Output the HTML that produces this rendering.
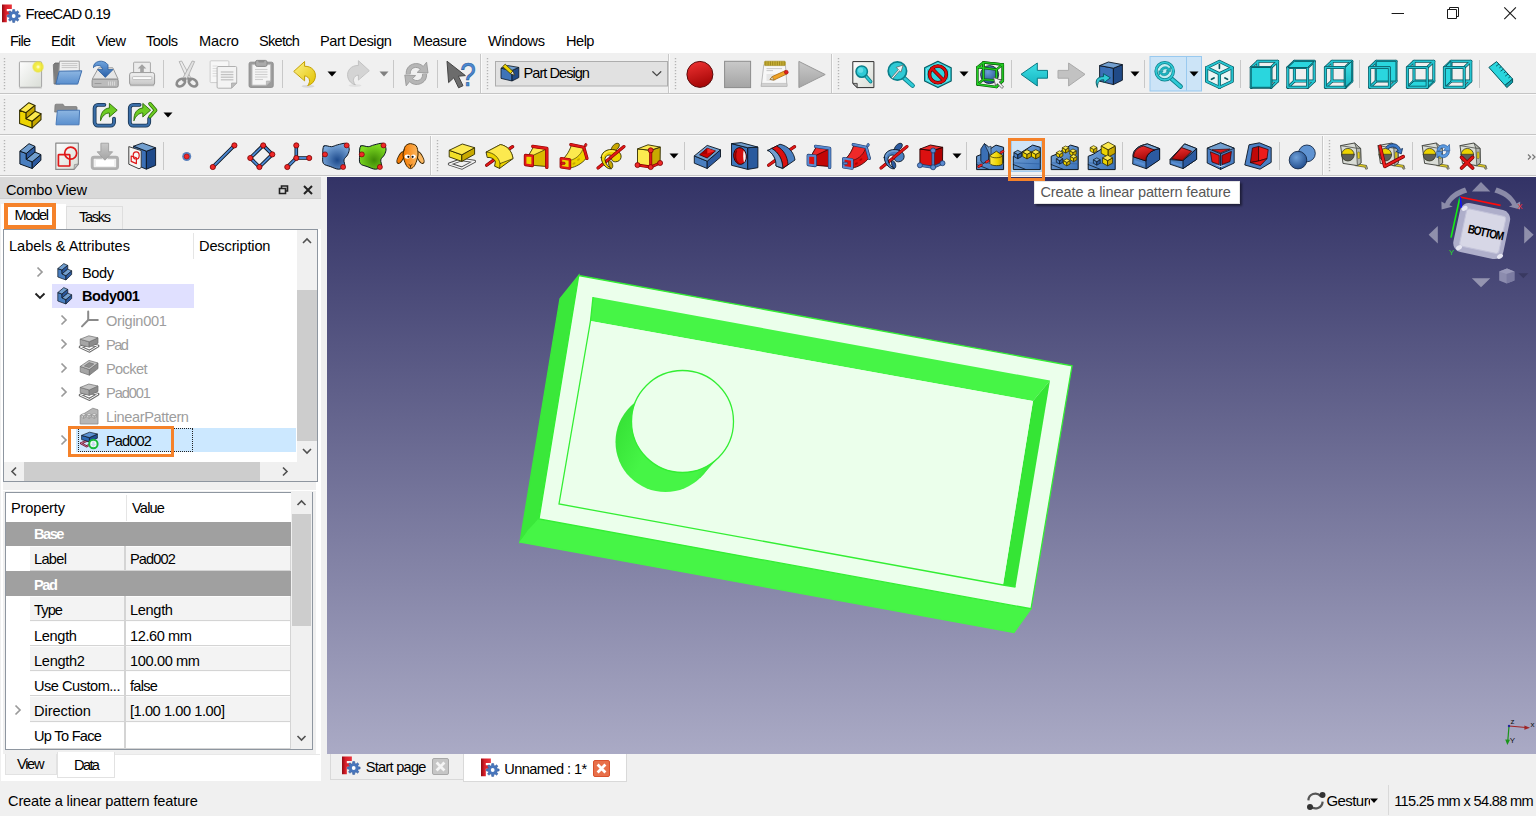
<!DOCTYPE html>
<html lang="en"><head><meta charset="utf-8"><title>FreeCAD 0.19</title>
<style>
html,body{margin:0;padding:0;}
body{width:1536px;height:816px;overflow:hidden;position:relative;background:#f0f0f0;font-family:"Liberation Sans",sans-serif;}
div,svg,span.t{position:absolute;}
span.t{white-space:nowrap;line-height:20px;}
svg{overflow:visible;}
</style></head>
<body>
<div style="left:0px;top:0px;width:1536px;height:53px;background:#fff;"></div>
<div style="left:0px;top:53px;width:1536px;height:124px;background:#f0f0f0;"></div>
<div style="left:0px;top:177px;width:1536px;height:639px;background:#f0f0f0;"></div>
<svg style="left:2px;top:4px;" width="21" height="20" viewBox="0 0 21 20"><defs><linearGradient id="gF" x1="0" y1="0" x2="1" y2="0"><stop offset="0" stop-color="#8e0a12"/><stop offset=".35" stop-color="#d81e28"/><stop offset="1" stop-color="#e8343c"/></linearGradient></defs><path d="M0 0.6h9.85v4.4h-5.05v2.3h3.9v3.4h-3.9v7.6h-4.8z" fill="url(#gF)"/><polygon points="16.24,10.79 18.13,11.03 18.13,12.97 16.24,13.21 15.77,14.36 16.93,15.86 15.56,17.23 14.06,16.07 12.91,16.54 12.67,18.43 10.73,18.43 10.49,16.54 9.34,16.07 7.84,17.23 6.47,15.86 7.63,14.36 7.16,13.21 5.27,12.97 5.27,11.03 7.16,10.79 7.63,9.64 6.47,8.14 7.84,6.77 9.34,7.93 10.49,7.46 10.73,5.57 12.67,5.57 12.91,7.46 14.06,7.93 15.56,6.77 16.93,8.14 15.77,9.64" fill="#4876bc" stroke="#2f5594" stroke-width=".5"/><circle cx="11.7" cy="12" r="1.9" fill="#fff"/></svg>
<span class="t" style="left:25.50px;top:4.42px;font-size:14.8px;color:#000;letter-spacing:-0.845px;">FreeCAD 0.19</span>
<svg style="left:1380px;top:0px;" width="156" height="28" viewBox="0 0 156 28"><path d="M11.6 13.5h12.4" stroke="#1a1a1a" stroke-width="1" fill="none"/><path d="M67.5 9.5h9v9h-9z M69.5 9.5v-2h9v9h-2" stroke="#1a1a1a" stroke-width="1" fill="none"/><path d="M124.3 7.3l11.6 11.8M135.9 7.3l-11.6 11.8" stroke="#1a1a1a" stroke-width="1.1" fill="none"/></svg>
<span class="t" style="left:10.00px;top:30.69px;font-size:14.6px;color:#000;letter-spacing:-0.841px;">File</span>
<span class="t" style="left:51.00px;top:30.69px;font-size:14.6px;color:#000;letter-spacing:-0.386px;">Edit</span>
<span class="t" style="left:96.00px;top:30.69px;font-size:14.6px;color:#000;letter-spacing:-0.460px;">View</span>
<span class="t" style="left:146.00px;top:30.69px;font-size:14.6px;color:#000;letter-spacing:-0.520px;">Tools</span>
<span class="t" style="left:199.00px;top:30.69px;font-size:14.6px;color:#000;letter-spacing:-0.140px;">Macro</span>
<span class="t" style="left:259.00px;top:30.69px;font-size:14.6px;color:#000;letter-spacing:-0.727px;">Sketch</span>
<span class="t" style="left:320.00px;top:30.69px;font-size:14.6px;color:#000;letter-spacing:-0.428px;">Part Design</span>
<span class="t" style="left:413.00px;top:30.69px;font-size:14.6px;color:#000;letter-spacing:-0.466px;">Measure</span>
<span class="t" style="left:488.00px;top:30.69px;font-size:14.6px;color:#000;letter-spacing:-0.371px;">Windows</span>
<span class="t" style="left:566.00px;top:30.69px;font-size:14.6px;color:#000;letter-spacing:-0.509px;">Help</span>
<div style="left:0px;top:93px;width:1536px;height:1px;background:#c5c5c5;"></div>
<div style="left:0px;top:94px;width:1536px;height:1px;background:#fafafa;"></div>
<div style="left:0px;top:134px;width:1536px;height:1px;background:#c5c5c5;"></div>
<div style="left:0px;top:135px;width:1536px;height:1px;background:#fafafa;"></div>
<div style="left:0px;top:175px;width:1536px;height:1px;background:#c5c5c5;"></div>
<div style="left:0px;top:176px;width:1536px;height:1px;background:#fafafa;"></div>
<svg style="left:3.4000000000000004px;top:58px;" width="4" height="32" viewBox="0 0 4 32"><path d="M1.5 0V32" stroke="#b4b4b4" stroke-width="1.4" stroke-dasharray="1.3 1.7"/></svg>
<svg style="left:485.9px;top:58px;" width="4" height="32" viewBox="0 0 4 32"><path d="M1.5 0V32" stroke="#b4b4b4" stroke-width="1.4" stroke-dasharray="1.3 1.7"/></svg>
<svg style="left:673.5px;top:58px;" width="4" height="32" viewBox="0 0 4 32"><path d="M1.5 0V32" stroke="#b4b4b4" stroke-width="1.4" stroke-dasharray="1.3 1.7"/></svg>
<svg style="left:837.1px;top:58px;" width="4" height="32" viewBox="0 0 4 32"><path d="M1.5 0V32" stroke="#b4b4b4" stroke-width="1.4" stroke-dasharray="1.3 1.7"/></svg>
<svg style="left:3.4000000000000004px;top:99px;" width="4" height="32" viewBox="0 0 4 32"><path d="M1.5 0V32" stroke="#b4b4b4" stroke-width="1.4" stroke-dasharray="1.3 1.7"/></svg>
<svg style="left:3.4000000000000004px;top:140px;" width="4" height="32" viewBox="0 0 4 32"><path d="M1.5 0V32" stroke="#b4b4b4" stroke-width="1.4" stroke-dasharray="1.3 1.7"/></svg>
<svg style="left:435.5px;top:140px;" width="4" height="32" viewBox="0 0 4 32"><path d="M1.5 0V32" stroke="#b4b4b4" stroke-width="1.4" stroke-dasharray="1.3 1.7"/></svg>
<svg style="left:1327.5px;top:140px;" width="4" height="32" viewBox="0 0 4 32"><path d="M1.5 0V32" stroke="#b4b4b4" stroke-width="1.4" stroke-dasharray="1.3 1.7"/></svg>
<div style="left:163.0px;top:60px;width:1px;height:28px;background:#c8c8c8;"></div>
<div style="left:282.0px;top:60px;width:1px;height:28px;background:#c8c8c8;"></div>
<div style="left:392.9px;top:60px;width:1px;height:28px;background:#c8c8c8;"></div>
<div style="left:437.0px;top:60px;width:1px;height:28px;background:#c8c8c8;"></div>
<div style="left:1011.2px;top:60px;width:1px;height:28px;background:#c8c8c8;"></div>
<div style="left:1143.9px;top:60px;width:1px;height:28px;background:#c8c8c8;"></div>
<div style="left:1240.0px;top:60px;width:1px;height:28px;background:#c8c8c8;"></div>
<div style="left:1359.3px;top:60px;width:1px;height:28px;background:#c8c8c8;"></div>
<div style="left:1478.5px;top:60px;width:1px;height:28px;background:#c8c8c8;"></div>
<div style="left:163.0px;top:142px;width:1px;height:28px;background:#c8c8c8;"></div>
<div style="left:683.9px;top:142px;width:1px;height:28px;background:#c8c8c8;"></div>
<div style="left:966.2px;top:142px;width:1px;height:28px;background:#c8c8c8;"></div>
<div style="left:1122.4px;top:142px;width:1px;height:28px;background:#c8c8c8;"></div>
<div style="left:1279.1px;top:142px;width:1px;height:28px;background:#c8c8c8;"></div>
<div style="left:1411.9px;top:142px;width:1px;height:28px;background:#c8c8c8;"></div>
<div style="left:480px;top:54px;width:1px;height:39px;background:#c8c8c8;"></div>
<div style="left:481px;top:54px;width:1px;height:39px;background:#fbfbfb;"></div>
<div style="left:667.6px;top:54px;width:1px;height:39px;background:#c8c8c8;"></div>
<div style="left:668.6px;top:54px;width:1px;height:39px;background:#fbfbfb;"></div>
<div style="left:831.4px;top:54px;width:1px;height:39px;background:#c8c8c8;"></div>
<div style="left:832.4px;top:54px;width:1px;height:39px;background:#fbfbfb;"></div>
<div style="left:429.8px;top:136px;width:1px;height:39px;background:#c8c8c8;"></div>
<div style="left:430.8px;top:136px;width:1px;height:39px;background:#fbfbfb;"></div>
<div style="left:1321.9px;top:136px;width:1px;height:39px;background:#c8c8c8;"></div>
<div style="left:1322.9px;top:136px;width:1px;height:39px;background:#fbfbfb;"></div>
<svg style="left:0px;top:0px;" width="1536" height="180" viewBox="0 0 1536 180"><defs>
<linearGradient id="gPage" x1="0" y1="0" x2="1" y2="1"><stop offset="0" stop-color="#fdfdfd"/><stop offset="1" stop-color="#d9ddd6"/></linearGradient>
<linearGradient id="gGray" x1="0" y1="0" x2="0" y2="1"><stop offset="0" stop-color="#c9c9c9"/><stop offset="1" stop-color="#a4a4a4"/></linearGradient>
<linearGradient id="gGray2" x1="0" y1="0" x2="0" y2="1"><stop offset="0" stop-color="#f4f4f4"/><stop offset="1" stop-color="#c4c4c4"/></linearGradient>
<linearGradient id="gRed" x1="0" y1="0" x2="0.3" y2="1"><stop offset="0" stop-color="#f23434"/><stop offset="1" stop-color="#a80808"/></linearGradient>
<linearGradient id="gBlueF" x1="0" y1="0" x2="0" y2="1"><stop offset="0" stop-color="#8db6e2"/><stop offset="1" stop-color="#5a8fce"/></linearGradient>
<linearGradient id="gBlueA" x1="0" y1="0" x2="0" y2="1"><stop offset="0" stop-color="#6fa4de"/><stop offset="1" stop-color="#2a60a8"/></linearGradient>
<linearGradient id="gYel" x1="0" y1="0" x2="1" y2="1"><stop offset="0" stop-color="#fdf28a"/><stop offset="1" stop-color="#e2c200"/></linearGradient>
<linearGradient id="gYelH" x1="0" y1="0" x2="1" y2="0"><stop offset="0" stop-color="#fce94f"/><stop offset="0.6" stop-color="#edd400"/><stop offset="1" stop-color="#c4a000"/></linearGradient>
<linearGradient id="gCyan" x1="0" y1="0" x2="0" y2="1"><stop offset="0" stop-color="#3fe0e6"/><stop offset="1" stop-color="#14b4c0"/></linearGradient>
<linearGradient id="gBlueL" x1="0" y1="0" x2="1" y2="1"><stop offset="0" stop-color="#7aa7da"/><stop offset="1" stop-color="#3b72b8"/></linearGradient>
<radialGradient id="gGlow"><stop offset="0" stop-color="#fffff0"/><stop offset="0.35" stop-color="#f6f04a"/><stop offset="0.75" stop-color="#ece42a" stop-opacity=".85"/><stop offset="1" stop-color="#ece42a" stop-opacity="0"/></radialGradient>
<radialGradient id="gSph" cx=".4" cy=".35" r=".7"><stop offset="0" stop-color="#6d9fd8"/><stop offset="1" stop-color="#1f4a8a"/></radialGradient>
<radialGradient id="gBlobB" cx=".55" cy=".65" r=".6"><stop offset="0" stop-color="#1d4a8c"/><stop offset="1" stop-color="#7aa7da"/></radialGradient>
<radialGradient id="gBlobG" cx=".55" cy=".65" r=".6"><stop offset="0" stop-color="#3f8a06"/><stop offset="1" stop-color="#7edc22"/></radialGradient>
<linearGradient id="gOr" x1="0" y1="0" x2="1" y2="0"><stop offset="0" stop-color="#f57900"/><stop offset="1" stop-color="#fcb860"/></linearGradient>
<linearGradient id="gView" x1="0" y1="0" x2="0" y2="1"><stop offset="0" stop-color="#333366"/><stop offset="1" stop-color="#a3a3be"/></linearGradient>
</defs><rect x="19.40" y="61.70" width="22.20" height="25.60" fill="url(#gPage)" rx="1" stroke="#a4a4a4" stroke-width="1" /><line x1="19.60" y1="87.90" x2="41.40" y2="87.90" stroke="#b8b8b8" stroke-width="1" stroke-linecap="round"/><circle cx="38.10" cy="66.90" r="6.30" fill="url(#gGlow)" /><path d="M53.6 64.5 L55 63 L60 63 L60 84 L54.5 84Z" fill="#7d7d7d" stroke="#666" stroke-width="0.8" stroke-linejoin="round" stroke-linecap="round" /><polygon points="59.60,61.20 79.20,61.20 79.40,72.00 58.20,83.00" fill="#f0f0f0" stroke="#9c9c9c" stroke-width="0.9" stroke-linejoin="round" /><line x1="62.00" y1="63.60" x2="77.00" y2="63.60" stroke="#c6c6c6" stroke-width="1" stroke-linecap="round"/><line x1="62.00" y1="65.60" x2="77.00" y2="65.60" stroke="#c6c6c6" stroke-width="1" stroke-linecap="round"/><line x1="62.00" y1="67.60" x2="77.00" y2="67.60" stroke="#c6c6c6" stroke-width="1" stroke-linecap="round"/><polygon points="59.20,71.20 81.80,70.80 77.70,84.10 55.90,84.10" fill="url(#gBlueF)" stroke="#3f6fae" stroke-width="1" stroke-linejoin="round" /><polygon points="98.60,67.80 112.80,67.80 118.10,79.20 92.20,79.20" fill="#e6e6e6" stroke="#9a9a9a" stroke-width="1" stroke-linejoin="round" /><rect x="92.10" y="79.20" width="26.10" height="8.00" fill="#bcbcbc" rx="1.5" stroke="#8c8c8c" stroke-width="1" /><line x1="108.50" y1="81.50" x2="108.50" y2="85.50" stroke="#d8d8d8" stroke-width="1" stroke-linecap="butt"/><line x1="110.50" y1="81.50" x2="110.50" y2="85.50" stroke="#d8d8d8" stroke-width="1" stroke-linecap="butt"/><line x1="112.50" y1="81.50" x2="112.50" y2="85.50" stroke="#d8d8d8" stroke-width="1" stroke-linecap="butt"/><line x1="114.50" y1="81.50" x2="114.50" y2="85.50" stroke="#d8d8d8" stroke-width="1" stroke-linecap="butt"/><line x1="95.00" y1="83.50" x2="101.00" y2="83.50" stroke="#9a9a9a" stroke-width="1.2" stroke-linecap="round"/><path d="M93.5 67.3 C92.8 61 103.5 58.5 108 64.8 L108 69.6 L113 69.6 L105.3 77.4 L97.6 69.6 L102.6 69.6 C102 65.5 97.5 63.8 93.5 67.3Z" fill="url(#gBlueA)" stroke="#2a5c9c" stroke-width="0.8" stroke-linejoin="round" stroke-linecap="round" /><rect x="133.60" y="62.20" width="16.80" height="12.00" fill="#ececec" rx="0.8" stroke="#a8a8a8" stroke-width="1" /><polygon points="142.00,64.30 146.30,68.60 143.80,68.60 143.80,72.00 140.20,72.00 140.20,68.60 137.70,68.60" fill="#a2a2a2" /><rect x="129.60" y="72.60" width="25.00" height="12.60" fill="url(#gGray2)" rx="2.2" stroke="#9a9a9a" stroke-width="1" /><rect x="132.60" y="76.60" width="19.20" height="3.00" fill="#fbfbfb" rx="0.8" stroke="#b4b4b4" stroke-width="0.8" /><line x1="130.50" y1="85.70" x2="153.80" y2="85.70" stroke="#b4b4b4" stroke-width="1" stroke-linecap="round"/><polygon points="179.20,61.60 181.60,61.00 190.80,77.80 187.20,79.60" fill="#ebebeb" stroke="#a6a6a6" stroke-width="0.8" stroke-linejoin="round" /><polygon points="194.60,61.60 192.20,61.00 183.00,77.80 186.60,79.60" fill="#e2e2e2" stroke="#a6a6a6" stroke-width="0.8" stroke-linejoin="round" /><ellipse cx="180.90" cy="82.60" rx="4.60" ry="3.30" fill="none" stroke="#8c8c8c" stroke-width="2.7" transform="rotate(-38 180.9 82.6)"/><ellipse cx="192.90" cy="82.60" rx="4.60" ry="3.30" fill="none" stroke="#8c8c8c" stroke-width="2.7" transform="rotate(38 192.9 82.6)"/><line x1="185.20" y1="78.60" x2="183.40" y2="80.20" stroke="#8c8c8c" stroke-width="2.7" stroke-linecap="round"/><line x1="188.60" y1="78.60" x2="190.40" y2="80.20" stroke="#8c8c8c" stroke-width="2.7" stroke-linecap="round"/><rect x="210.10" y="60.80" width="18.80" height="21.80" fill="#f7f7f7" rx="1" stroke="#cdcdcd" stroke-width="1" /><line x1="213.00" y1="66.00" x2="217.00" y2="66.00" stroke="#dcdcdc" stroke-width="1" stroke-linecap="round"/><line x1="213.00" y1="68.50" x2="217.00" y2="68.50" stroke="#dcdcdc" stroke-width="1" stroke-linecap="round"/><line x1="213.00" y1="71.00" x2="217.00" y2="71.00" stroke="#dcdcdc" stroke-width="1" stroke-linecap="round"/><line x1="213.00" y1="73.50" x2="217.00" y2="73.50" stroke="#dcdcdc" stroke-width="1" stroke-linecap="round"/><line x1="213.00" y1="76.00" x2="217.00" y2="76.00" stroke="#dcdcdc" stroke-width="1" stroke-linecap="round"/><path d="M218.3 66.5 H235.5 a1.2 1.2 0 0 1 1.2 1.2 V83 L231.5 88.2 H218.3 a1.2 1.2 0 0 1 -1.2 -1.2 V67.7 a1.2 1.2 0 0 1 1.2 -1.2Z" fill="#f3f3f3" stroke="#b0b0b0" stroke-width="1" stroke-linejoin="round" stroke-linecap="round" /><polygon points="236.70,83.00 231.50,88.20 231.50,83.00" fill="#bdbdbd" stroke="#a6a6a6" stroke-width="0.7" stroke-linejoin="round" /><line x1="220.80" y1="72.00" x2="233.40" y2="72.00" stroke="#c2c2c2" stroke-width="1.3" stroke-linecap="butt"/><line x1="220.80" y1="74.60" x2="233.40" y2="74.60" stroke="#c2c2c2" stroke-width="1.3" stroke-linecap="butt"/><line x1="220.80" y1="77.20" x2="233.40" y2="77.20" stroke="#c2c2c2" stroke-width="1.3" stroke-linecap="butt"/><line x1="220.80" y1="79.80" x2="233.40" y2="79.80" stroke="#c2c2c2" stroke-width="1.3" stroke-linecap="butt"/><rect x="249.10" y="62.20" width="24.10" height="25.20" fill="#9c9c9c" rx="1.6" stroke="#8e8e8e" stroke-width="1" /><path d="M252.2 64.6 H270.6 V81 L266.4 85.2 H252.2Z" fill="#f5f5f5" stroke="#b8b8b8" stroke-width="0.8" stroke-linejoin="round" stroke-linecap="round" /><polygon points="270.60,81.00 266.40,85.20 266.40,81.00" fill="#c2c2c2" stroke="#a6a6a6" stroke-width="0.6" stroke-linejoin="round" /><rect x="255.60" y="60.40" width="11.40" height="6.00" fill="#ababab" rx="1.6" stroke="#8a8a8a" stroke-width="1" /><rect x="258.30" y="60.20" width="6.00" height="2.20" fill="#8f8f8f" rx="1" /><line x1="255.00" y1="69.50" x2="267.50" y2="69.50" stroke="#cfcfcf" stroke-width="1.1" stroke-linecap="butt"/><line x1="255.00" y1="72.00" x2="267.50" y2="72.00" stroke="#cfcfcf" stroke-width="1.1" stroke-linecap="butt"/><line x1="255.00" y1="74.50" x2="267.50" y2="74.50" stroke="#cfcfcf" stroke-width="1.1" stroke-linecap="butt"/><line x1="255.00" y1="77.00" x2="267.50" y2="77.00" stroke="#cfcfcf" stroke-width="1.1" stroke-linecap="butt"/><line x1="255.00" y1="79.50" x2="263.00" y2="79.50" stroke="#cfcfcf" stroke-width="1.1" stroke-linecap="butt"/><ellipse cx="308.00" cy="86.30" rx="6.50" ry="1.40" fill="#000" opacity=".10"/><path d="M294 71.2 L304.6 61.5 L304.6 66.3 C311.5 66 316.3 71 315.3 77.5 C314.6 81.8 311.5 84.6 307.7 85.5 C310.5 82.5 310.5 76.8 304.6 75.8 L304.6 80.5Z" fill="url(#gYel)" stroke="#c4a000" stroke-width="1" stroke-linejoin="round" stroke-linecap="round" /><g transform="translate(663 -0.8) scale(-1 1)"><path d="M294 71.2 L304.6 61.5 L304.6 66.3 C311.5 66 316.3 71 315.3 77.5 C314.6 81.8 311.5 84.6 307.7 85.5 C310.5 82.5 310.5 76.8 304.6 75.8 L304.6 80.5Z" fill="#d4d4d4" stroke="#c2c2c2" stroke-width="1" stroke-linejoin="round" stroke-linecap="round" /></g><ellipse cx="355.00" cy="85.60" rx="6.50" ry="1.40" fill="#000" opacity=".06"/><path d="M406.2 73.5 C405.5 64 418 60.5 423.2 66.5 L426.6 62.2 L428 73 L417.2 72.4 L420.4 69.3 C416.5 65.6 410 67.5 410.2 73.5Z" fill="#b6b6b6" stroke="#999" stroke-width="0.9" stroke-linejoin="round" stroke-linecap="round" /><path d="M426.6 74.5 C427.3 84 414.8 87.5 409.6 81.5 L406.2 85.8 L404.8 75 L415.6 75.6 L412.4 78.7 C416.3 82.4 422.8 80.5 422.6 74.5Z" fill="#b6b6b6" stroke="#999" stroke-width="0.9" stroke-linejoin="round" stroke-linecap="round" /><text x="460.2" y="86.2" font-family="Liberation Sans, sans-serif" font-size="33.5" fill="#4a8ad4" stroke="#2c5c9c" stroke-width="0.7" textLength="15.5" lengthAdjust="spacingAndGlyphs">?</text><polygon points="447.00,61.20 448.60,82.60 453.80,77.80 458.60,87.80 463.00,85.70 458.40,76.20 465.40,75.60" fill="#6c6c6c" stroke="#454545" stroke-width="1" stroke-linejoin="round" /><rect x="495.50" y="61.50" width="172.00" height="24.50" fill="#e1e1e1" stroke="#adadad" stroke-width="1" /><polygon points="501.00,68.20 512.00,70.40 512.00,81.00 501.00,78.40" fill="#3f74b8" stroke="#0b1521" stroke-width="0.8" stroke-linejoin="round" /><polygon points="512.00,70.40 518.80,67.40 518.80,77.60 512.00,81.00" fill="#204a87" stroke="#0b1521" stroke-width="0.8" stroke-linejoin="round" /><polygon points="501.00,68.20 508.00,65.60 518.80,67.40 512.00,70.40" fill="#729fcf" stroke="#0b1521" stroke-width="0.8" stroke-linejoin="round" /><polygon points="502.60,66.60 505.20,64.20 512.80,71.20 510.40,73.60" fill="#edd400" stroke="#3a3200" stroke-width="0.8" stroke-linejoin="round" /><polygon points="510.40,73.60 512.80,71.20 514.60,75.20" fill="#f4f0e6" stroke="#3a3200" stroke-width="0.7" stroke-linejoin="round" /><polyline points="652.80,71.80 656.80,75.60 660.80,71.80" fill="none" stroke="#444" stroke-width="1.3" stroke-linecap="round" stroke-linejoin="round" /><circle cx="699.90" cy="74.40" r="13.00" fill="url(#gRed)" stroke="#5a0a0a" stroke-width="1" /><rect x="724.60" y="61.30" width="26.00" height="26.30" fill="url(#gGray)" stroke="#8c8c8c" stroke-width="1" /><path d="M764.2 64.8 H785.4 L787 86.4 H761.6Z" fill="#f7f7f7" stroke="#b4b4b4" stroke-width="0.9" stroke-linejoin="round" stroke-linecap="round" /><path d="M761.8 83.4 H786.8 L787 86.4 H761.6Z" fill="#d2d2d2" stroke="#b4b4b4" stroke-width="0.6" stroke-linejoin="round" stroke-linecap="round" /><rect x="764.40" y="61.20" width="21.00" height="4.40" fill="#c9b238" rx="1" stroke="#a89020" stroke-width="0.6" /><line x1="765.80" y1="61.40" x2="765.80" y2="65.40" stroke="#8a7410" stroke-width="0.7" stroke-linecap="butt"/><line x1="768.10" y1="61.40" x2="768.10" y2="65.40" stroke="#8a7410" stroke-width="0.7" stroke-linecap="butt"/><line x1="770.40" y1="61.40" x2="770.40" y2="65.40" stroke="#8a7410" stroke-width="0.7" stroke-linecap="butt"/><line x1="772.70" y1="61.40" x2="772.70" y2="65.40" stroke="#8a7410" stroke-width="0.7" stroke-linecap="butt"/><line x1="775.00" y1="61.40" x2="775.00" y2="65.40" stroke="#8a7410" stroke-width="0.7" stroke-linecap="butt"/><line x1="777.30" y1="61.40" x2="777.30" y2="65.40" stroke="#8a7410" stroke-width="0.7" stroke-linecap="butt"/><line x1="779.60" y1="61.40" x2="779.60" y2="65.40" stroke="#8a7410" stroke-width="0.7" stroke-linecap="butt"/><line x1="781.90" y1="61.40" x2="781.90" y2="65.40" stroke="#8a7410" stroke-width="0.7" stroke-linecap="butt"/><line x1="784.20" y1="61.40" x2="784.20" y2="65.40" stroke="#8a7410" stroke-width="0.7" stroke-linecap="butt"/><line x1="766.50" y1="68.60" x2="782.00" y2="68.60" stroke="#c8c8c8" stroke-width="1" stroke-linecap="butt"/><line x1="766.50" y1="70.60" x2="773.00" y2="70.60" stroke="#c8c8c8" stroke-width="1" stroke-linecap="butt"/><rect x="766.50" y="74.00" width="9.00" height="7.00" fill="#e6e6e6" /><polygon points="770.00,79.40 772.20,76.60 785.40,70.60 787.20,73.80 774.00,80.00" fill="#f0a326" stroke="#a86a10" stroke-width="0.8" stroke-linejoin="round" /><polygon points="770.00,79.40 772.20,76.60 774.00,80.00" fill="#e8d8b0" stroke="#8a6a30" stroke-width="0.6" stroke-linejoin="round" /><circle cx="786.30" cy="72.20" r="1.90" fill="#e02020" stroke="#a01010" stroke-width="0.6" /><polygon points="798.90,61.40 798.90,87.60 825.20,74.50" fill="url(#gGray)" stroke="#999" stroke-width="1" stroke-linejoin="round" /><polygon points="852.80,61.60 873.90,61.60 873.90,87.60 857.20,87.60 852.80,83.40" fill="url(#gPage)" stroke="#2e2e2e" stroke-width="1" stroke-linejoin="round" /><polygon points="852.80,83.40 857.20,83.40 857.20,87.60" fill="#b0b0b0" stroke="#2e2e2e" stroke-width="0.8" stroke-linejoin="round" /><line x1="865.60" y1="75.80" x2="870.60" y2="81.60" stroke="#0a7f8a" stroke-width="3.6" stroke-linecap="round"/><line x1="865.60" y1="75.80" x2="870.60" y2="81.60" stroke="#2fcad6" stroke-width="1.9" stroke-linecap="round"/><circle cx="861.70" cy="71.60" r="5.70" fill="#2fcad6" stroke="#0a7f8a" stroke-width="1.5" /><circle cx="860.60" cy="70.20" r="2.60" fill="#7be6ee" opacity=".7"/><line x1="904.00" y1="78.00" x2="912.60" y2="85.60" stroke="#0a7f8a" stroke-width="4.6" stroke-linecap="round"/><line x1="904.00" y1="78.00" x2="912.60" y2="85.60" stroke="#2fcad6" stroke-width="2.8" stroke-linecap="round"/><circle cx="897.40" cy="71.00" r="9.20" fill="#2fcad6" stroke="#0a7f8a" stroke-width="1.7" /><polygon points="891.60,77.40 898.40,69.60 896.20,67.40 903.20,65.00 901.00,72.20 899.60,70.80 892.80,78.60" fill="#f4f4f4" stroke="#5a6a6a" stroke-width="0.8" stroke-linejoin="round" /><polygon points="937.90,61.20 951.20,67.80 951.20,81.00 937.90,87.60 924.60,81.00 924.60,67.80" fill="#2fd2dc" stroke="#075a62" stroke-width="1.1" stroke-linejoin="round" /><polygon points="937.90,63.40 949.20,69.00 949.20,79.80 937.90,85.40 926.60,79.80 926.60,69.00" fill="none" stroke="#8af0f4" stroke-width="0.8" stroke-linejoin="round" /><circle cx="937.90" cy="74.40" r="8.40" fill="none" stroke="#5a0000" stroke-width="3.6" /><line x1="932.00" y1="68.40" x2="943.80" y2="80.40" stroke="#5a0000" stroke-width="3.6" stroke-linecap="round"/><circle cx="937.90" cy="74.40" r="8.40" fill="none" stroke="#dc0c0c" stroke-width="2.3" /><line x1="932.00" y1="68.40" x2="943.80" y2="80.40" stroke="#dc0c0c" stroke-width="2.3" stroke-linecap="round"/><polyline points="983.40,62.40 1002.80,64.40 1002.80,81.00 983.40,79.60 983.40,62.40" fill="none" stroke="#0a5a0a" stroke-width="2.5" stroke-linecap="round" stroke-linejoin="round" /><polyline points="983.40,62.40 1002.80,64.40 1002.80,81.00 983.40,79.60 983.40,62.40" fill="none" stroke="#1fc81f" stroke-width="1.3" stroke-linecap="round" stroke-linejoin="round" /><circle cx="989.60" cy="74.60" r="9.00" fill="url(#gSph)" stroke="#0b1521" stroke-width="0.8" /><polyline points="983.40,62.40 1002.80,64.40 1002.80,81.00 983.40,79.60 983.40,62.40" fill="none" stroke="#0a5a0a" stroke-width="2.5" stroke-linecap="round" stroke-linejoin="round" /><polyline points="977.40,67.20 996.40,69.60 996.40,87.00 977.40,84.40 977.40,67.20" fill="none" stroke="#0a5a0a" stroke-width="2.5" stroke-linecap="round" stroke-linejoin="round" /><line x1="977.40" y1="67.20" x2="983.40" y2="62.40" stroke="#0a5a0a" stroke-width="2.5" stroke-linecap="round"/><line x1="996.40" y1="69.60" x2="1002.80" y2="64.40" stroke="#0a5a0a" stroke-width="2.5" stroke-linecap="round"/><line x1="996.40" y1="87.00" x2="1002.80" y2="81.00" stroke="#0a5a0a" stroke-width="2.5" stroke-linecap="round"/><line x1="977.40" y1="84.40" x2="983.40" y2="79.60" stroke="#0a5a0a" stroke-width="2.5" stroke-linecap="round"/><polyline points="983.40,62.40 1002.80,64.40 1002.80,81.00 983.40,79.60 983.40,62.40" fill="none" stroke="#22d022" stroke-width="1.3" stroke-linecap="round" stroke-linejoin="round" /><polyline points="977.40,67.20 996.40,69.60 996.40,87.00 977.40,84.40 977.40,67.20" fill="none" stroke="#22d022" stroke-width="1.3" stroke-linecap="round" stroke-linejoin="round" /><line x1="977.40" y1="67.20" x2="983.40" y2="62.40" stroke="#22d022" stroke-width="1.3" stroke-linecap="round"/><line x1="996.40" y1="69.60" x2="1002.80" y2="64.40" stroke="#22d022" stroke-width="1.3" stroke-linecap="round"/><line x1="996.40" y1="87.00" x2="1002.80" y2="81.00" stroke="#22d022" stroke-width="1.3" stroke-linecap="round"/><line x1="977.40" y1="84.40" x2="983.40" y2="79.60" stroke="#22d022" stroke-width="1.3" stroke-linecap="round"/><polygon points="993.60,77.40 1001.60,80.40 999.00,82.00 1003.60,87.00 1001.80,88.40 997.40,83.60 995.60,86.00" fill="#f2f2f2" stroke="#5a5a5a" stroke-width="0.8" stroke-linejoin="round" /><polygon points="1021.00,74.30 1037.30,63.00 1037.30,70.40 1047.50,70.40 1047.50,78.20 1037.30,78.20 1037.30,86.00" fill="url(#gCyan)" stroke="#0a7a84" stroke-width="1" stroke-linejoin="round" /><polygon points="1085.00,74.30 1068.60,63.00 1068.60,70.40 1058.00,70.40 1058.00,78.20 1068.60,78.20 1068.60,86.00" fill="#c2c2c2" stroke="#aaaaaa" stroke-width="1" stroke-linejoin="round" /><polygon points="1099.60,65.60 1113.40,68.20 1113.40,84.60 1099.60,81.20" fill="#3b70b6" stroke="#0b1521" stroke-width="0.9" stroke-linejoin="round" /><polygon points="1113.40,68.20 1122.40,64.60 1122.40,80.20 1113.40,84.60" fill="#204a87" stroke="#0b1521" stroke-width="0.9" stroke-linejoin="round" /><polygon points="1099.60,65.60 1108.40,62.00 1122.40,64.60 1113.40,68.20" fill="#729fcf" stroke="#0b1521" stroke-width="0.9" stroke-linejoin="round" /><path d="M1097.4 87 C1094 80.5 1097.5 76.5 1103.6 76.6 L1103.4 73.6 L1110.4 77.8 L1104 82.6 L1103.8 79.8 C1099.5 79.6 1097.5 82 1097.4 87Z" fill="#2fcad6" stroke="#06545c" stroke-width="0.9" stroke-linejoin="round" stroke-linecap="round" /><rect x="1150.00" y="56.50" width="51.50" height="34.50" fill="#cce4f7" stroke="#99c9ef" stroke-width="1" /><line x1="1186.50" y1="57.00" x2="1186.50" y2="90.50" stroke="#99c9ef" stroke-width="1" stroke-linecap="butt"/><line x1="1171.00" y1="78.20" x2="1180.60" y2="86.60" stroke="#0a7f8a" stroke-width="4.6" stroke-linecap="round"/><line x1="1171.00" y1="78.20" x2="1180.60" y2="86.60" stroke="#2fcad6" stroke-width="2.8" stroke-linecap="round"/><circle cx="1164.70" cy="71.20" r="8.70" fill="#c4eef2" stroke="#0a7f8a" stroke-width="3.2" /><circle cx="1164.70" cy="71.20" r="8.70" fill="none" stroke="#2fcad6" stroke-width="1.7" /><path d="M1160.2 70.4 C1161 66 1167.5 65.6 1169 68.6 L1170.6 67.2 L1170.6 71.6 L1166.2 71 L1167.6 69.8 C1166.4 68.2 1163 68.6 1162.6 70.8Z" fill="#18b4c0" stroke="#0a7f8a" stroke-width="0.5" stroke-linejoin="round" stroke-linecap="round" /><path d="M1169.2 72 C1168.4 76.4 1161.9 76.8 1160.4 73.8 L1158.8 75.2 L1158.8 70.8 L1163.2 71.4 L1161.8 72.6 C1163 74.2 1166.4 73.8 1166.8 71.6Z" fill="#18b4c0" stroke="#0a7f8a" stroke-width="0.5" stroke-linejoin="round" stroke-linecap="round" /><polygon points="1219.40,61.40 1232.20,67.60 1232.20,81.40 1219.40,87.40 1206.60,81.40 1206.60,67.60" fill="#e9f6f6" /><polygon points="1219.40,61.40 1232.20,67.60 1232.20,81.40 1219.40,87.40 1206.60,81.40 1206.60,67.60" fill="none" stroke="#06545c" stroke-width="3.2" stroke-linejoin="round" /><polyline points="1206.60,67.60 1219.40,73.80 1232.20,67.60" fill="none" stroke="#06545c" stroke-width="3.2" stroke-linecap="round" stroke-linejoin="round" /><line x1="1219.40" y1="73.80" x2="1219.40" y2="87.40" stroke="#06545c" stroke-width="3.2" stroke-linecap="round"/><polygon points="1219.40,61.40 1232.20,67.60 1232.20,81.40 1219.40,87.40 1206.60,81.40 1206.60,67.60" fill="none" stroke="#25c4d0" stroke-width="1.8" stroke-linejoin="round" /><polyline points="1206.60,67.60 1219.40,73.80 1232.20,67.60" fill="none" stroke="#25c4d0" stroke-width="1.8" stroke-linecap="round" stroke-linejoin="round" /><line x1="1219.40" y1="73.80" x2="1219.40" y2="87.40" stroke="#25c4d0" stroke-width="1.8" stroke-linecap="round"/><line x1="1219.40" y1="64.50" x2="1219.40" y2="68.50" stroke="#06545c" stroke-width="1.6" stroke-linecap="round"/><line x1="1211.50" y1="79.20" x2="1214.00" y2="78.00" stroke="#06545c" stroke-width="1.8" stroke-linecap="round"/><line x1="1225.00" y1="78.00" x2="1227.50" y2="79.20" stroke="#06545c" stroke-width="1.8" stroke-linecap="round"/><polygon points="1251.20,67.50 1271.00,67.50 1271.00,87.30 1251.20,87.30 1251.20,67.50" fill="#e9f6f6" opacity=".0"/><polygon points="1257.80,61.30 1277.60,61.30 1277.60,81.10 1257.80,81.10" fill="none" stroke="#06545c" stroke-width="3.0" stroke-linejoin="round" /><line x1="1251.20" y1="67.50" x2="1257.80" y2="61.30" stroke="#06545c" stroke-width="3.0" stroke-linecap="round"/><line x1="1271.00" y1="67.50" x2="1277.60" y2="61.30" stroke="#06545c" stroke-width="3.0" stroke-linecap="round"/><line x1="1271.00" y1="87.30" x2="1277.60" y2="81.10" stroke="#06545c" stroke-width="3.0" stroke-linecap="round"/><line x1="1251.20" y1="87.30" x2="1257.80" y2="81.10" stroke="#06545c" stroke-width="3.0" stroke-linecap="round"/><polygon points="1257.80,61.30 1277.60,61.30 1277.60,81.10 1257.80,81.10" fill="none" stroke="#25c4d0" stroke-width="1.6" stroke-linejoin="round" /><line x1="1251.20" y1="67.50" x2="1257.80" y2="61.30" stroke="#25c4d0" stroke-width="1.6" stroke-linecap="round"/><line x1="1271.00" y1="67.50" x2="1277.60" y2="61.30" stroke="#25c4d0" stroke-width="1.6" stroke-linecap="round"/><line x1="1271.00" y1="87.30" x2="1277.60" y2="81.10" stroke="#25c4d0" stroke-width="1.6" stroke-linecap="round"/><line x1="1251.20" y1="87.30" x2="1257.80" y2="81.10" stroke="#25c4d0" stroke-width="1.6" stroke-linecap="round"/><polygon points="1251.20,67.50 1271.00,67.50 1271.00,87.30 1251.20,87.30" fill="#2ad6de" stroke="#06545c" stroke-width="0.9" stroke-linejoin="round" /><polygon points="1251.20,67.50 1271.00,67.50 1271.00,87.30 1251.20,87.30" fill="none" stroke="#06545c" stroke-width="3.0" stroke-linejoin="round" /><polygon points="1251.20,67.50 1271.00,67.50 1271.00,87.30 1251.20,87.30" fill="none" stroke="#25c4d0" stroke-width="1.6" stroke-linejoin="round" /><polygon points="1251.20,67.50 1271.00,67.50 1271.00,87.30 1251.20,87.30" fill="#2ad6de" stroke="#06545c" stroke-width="0.9" stroke-linejoin="round" /><polygon points="1287.80,67.50 1307.60,67.50 1307.60,87.30 1287.80,87.30 1287.80,67.50" fill="#e9f6f6" opacity=".0"/><polygon points="1294.40,61.30 1314.20,61.30 1314.20,81.10 1294.40,81.10" fill="none" stroke="#06545c" stroke-width="3.0" stroke-linejoin="round" /><line x1="1287.80" y1="67.50" x2="1294.40" y2="61.30" stroke="#06545c" stroke-width="3.0" stroke-linecap="round"/><line x1="1307.60" y1="67.50" x2="1314.20" y2="61.30" stroke="#06545c" stroke-width="3.0" stroke-linecap="round"/><line x1="1307.60" y1="87.30" x2="1314.20" y2="81.10" stroke="#06545c" stroke-width="3.0" stroke-linecap="round"/><line x1="1287.80" y1="87.30" x2="1294.40" y2="81.10" stroke="#06545c" stroke-width="3.0" stroke-linecap="round"/><polygon points="1294.40,61.30 1314.20,61.30 1314.20,81.10 1294.40,81.10" fill="none" stroke="#25c4d0" stroke-width="1.6" stroke-linejoin="round" /><line x1="1287.80" y1="67.50" x2="1294.40" y2="61.30" stroke="#25c4d0" stroke-width="1.6" stroke-linecap="round"/><line x1="1307.60" y1="67.50" x2="1314.20" y2="61.30" stroke="#25c4d0" stroke-width="1.6" stroke-linecap="round"/><line x1="1307.60" y1="87.30" x2="1314.20" y2="81.10" stroke="#25c4d0" stroke-width="1.6" stroke-linecap="round"/><line x1="1287.80" y1="87.30" x2="1294.40" y2="81.10" stroke="#25c4d0" stroke-width="1.6" stroke-linecap="round"/><polygon points="1287.80,67.50 1307.60,67.50 1314.20,61.30 1294.40,61.30" fill="#2ad6de" stroke="#06545c" stroke-width="0.9" stroke-linejoin="round" /><polygon points="1287.80,67.50 1307.60,67.50 1307.60,87.30 1287.80,87.30" fill="none" stroke="#06545c" stroke-width="3.0" stroke-linejoin="round" /><polygon points="1287.80,67.50 1307.60,67.50 1307.60,87.30 1287.80,87.30" fill="none" stroke="#25c4d0" stroke-width="1.6" stroke-linejoin="round" /><polygon points="1287.80,67.50 1307.60,67.50 1314.20,61.30 1294.40,61.30" fill="#2ad6de" stroke="#06545c" stroke-width="0.9" stroke-linejoin="round" /><polygon points="1325.40,67.50 1345.20,67.50 1345.20,87.30 1325.40,87.30 1325.40,67.50" fill="#e9f6f6" opacity=".0"/><polygon points="1332.00,61.30 1351.80,61.30 1351.80,81.10 1332.00,81.10" fill="none" stroke="#06545c" stroke-width="3.0" stroke-linejoin="round" /><line x1="1325.40" y1="67.50" x2="1332.00" y2="61.30" stroke="#06545c" stroke-width="3.0" stroke-linecap="round"/><line x1="1345.20" y1="67.50" x2="1351.80" y2="61.30" stroke="#06545c" stroke-width="3.0" stroke-linecap="round"/><line x1="1345.20" y1="87.30" x2="1351.80" y2="81.10" stroke="#06545c" stroke-width="3.0" stroke-linecap="round"/><line x1="1325.40" y1="87.30" x2="1332.00" y2="81.10" stroke="#06545c" stroke-width="3.0" stroke-linecap="round"/><polygon points="1332.00,61.30 1351.80,61.30 1351.80,81.10 1332.00,81.10" fill="none" stroke="#25c4d0" stroke-width="1.6" stroke-linejoin="round" /><line x1="1325.40" y1="67.50" x2="1332.00" y2="61.30" stroke="#25c4d0" stroke-width="1.6" stroke-linecap="round"/><line x1="1345.20" y1="67.50" x2="1351.80" y2="61.30" stroke="#25c4d0" stroke-width="1.6" stroke-linecap="round"/><line x1="1345.20" y1="87.30" x2="1351.80" y2="81.10" stroke="#25c4d0" stroke-width="1.6" stroke-linecap="round"/><line x1="1325.40" y1="87.30" x2="1332.00" y2="81.10" stroke="#25c4d0" stroke-width="1.6" stroke-linecap="round"/><polygon points="1345.20,67.50 1351.80,61.30 1351.80,81.10 1345.20,87.30" fill="#2ad6de" stroke="#06545c" stroke-width="0.9" stroke-linejoin="round" /><polygon points="1325.40,67.50 1345.20,67.50 1345.20,87.30 1325.40,87.30" fill="none" stroke="#06545c" stroke-width="3.0" stroke-linejoin="round" /><polygon points="1325.40,67.50 1345.20,67.50 1345.20,87.30 1325.40,87.30" fill="none" stroke="#25c4d0" stroke-width="1.6" stroke-linejoin="round" /><polygon points="1345.20,67.50 1351.80,61.30 1351.80,81.10 1345.20,87.30" fill="url(#gCyan)" stroke="#06545c" stroke-width="0.9" stroke-linejoin="round" /><polygon points="1369.60,67.50 1389.40,67.50 1389.40,87.30 1369.60,87.30 1369.60,67.50" fill="#e9f6f6" opacity=".0"/><polygon points="1376.20,61.30 1396.00,61.30 1396.00,81.10 1376.20,81.10" fill="none" stroke="#06545c" stroke-width="3.0" stroke-linejoin="round" /><line x1="1369.60" y1="67.50" x2="1376.20" y2="61.30" stroke="#06545c" stroke-width="3.0" stroke-linecap="round"/><line x1="1389.40" y1="67.50" x2="1396.00" y2="61.30" stroke="#06545c" stroke-width="3.0" stroke-linecap="round"/><line x1="1389.40" y1="87.30" x2="1396.00" y2="81.10" stroke="#06545c" stroke-width="3.0" stroke-linecap="round"/><line x1="1369.60" y1="87.30" x2="1376.20" y2="81.10" stroke="#06545c" stroke-width="3.0" stroke-linecap="round"/><polygon points="1376.20,61.30 1396.00,61.30 1396.00,81.10 1376.20,81.10" fill="none" stroke="#25c4d0" stroke-width="1.6" stroke-linejoin="round" /><line x1="1369.60" y1="67.50" x2="1376.20" y2="61.30" stroke="#25c4d0" stroke-width="1.6" stroke-linecap="round"/><line x1="1389.40" y1="67.50" x2="1396.00" y2="61.30" stroke="#25c4d0" stroke-width="1.6" stroke-linecap="round"/><line x1="1389.40" y1="87.30" x2="1396.00" y2="81.10" stroke="#25c4d0" stroke-width="1.6" stroke-linecap="round"/><line x1="1369.60" y1="87.30" x2="1376.20" y2="81.10" stroke="#25c4d0" stroke-width="1.6" stroke-linecap="round"/><polygon points="1376.20,61.30 1396.00,61.30 1396.00,81.10 1376.20,81.10" fill="#2ad6de" stroke="#06545c" stroke-width="0.9" stroke-linejoin="round" /><polygon points="1369.60,67.50 1389.40,67.50 1389.40,87.30 1369.60,87.30" fill="none" stroke="#06545c" stroke-width="3.0" stroke-linejoin="round" /><polygon points="1369.60,67.50 1389.40,67.50 1389.40,87.30 1369.60,87.30" fill="none" stroke="#25c4d0" stroke-width="1.6" stroke-linejoin="round" /><polygon points="1407.40,67.50 1427.20,67.50 1427.20,87.30 1407.40,87.30 1407.40,67.50" fill="#e9f6f6" opacity=".0"/><polygon points="1414.00,61.30 1433.80,61.30 1433.80,81.10 1414.00,81.10" fill="none" stroke="#06545c" stroke-width="3.0" stroke-linejoin="round" /><line x1="1407.40" y1="67.50" x2="1414.00" y2="61.30" stroke="#06545c" stroke-width="3.0" stroke-linecap="round"/><line x1="1427.20" y1="67.50" x2="1433.80" y2="61.30" stroke="#06545c" stroke-width="3.0" stroke-linecap="round"/><line x1="1427.20" y1="87.30" x2="1433.80" y2="81.10" stroke="#06545c" stroke-width="3.0" stroke-linecap="round"/><line x1="1407.40" y1="87.30" x2="1414.00" y2="81.10" stroke="#06545c" stroke-width="3.0" stroke-linecap="round"/><polygon points="1414.00,61.30 1433.80,61.30 1433.80,81.10 1414.00,81.10" fill="none" stroke="#25c4d0" stroke-width="1.6" stroke-linejoin="round" /><line x1="1407.40" y1="67.50" x2="1414.00" y2="61.30" stroke="#25c4d0" stroke-width="1.6" stroke-linecap="round"/><line x1="1427.20" y1="67.50" x2="1433.80" y2="61.30" stroke="#25c4d0" stroke-width="1.6" stroke-linecap="round"/><line x1="1427.20" y1="87.30" x2="1433.80" y2="81.10" stroke="#25c4d0" stroke-width="1.6" stroke-linecap="round"/><line x1="1407.40" y1="87.30" x2="1414.00" y2="81.10" stroke="#25c4d0" stroke-width="1.6" stroke-linecap="round"/><polygon points="1407.40,87.30 1427.20,87.30 1433.80,81.10 1414.00,81.10" fill="#2ad6de" stroke="#06545c" stroke-width="0.9" stroke-linejoin="round" /><polygon points="1407.40,67.50 1427.20,67.50 1427.20,87.30 1407.40,87.30" fill="none" stroke="#06545c" stroke-width="3.0" stroke-linejoin="round" /><polygon points="1407.40,67.50 1427.20,67.50 1427.20,87.30 1407.40,87.30" fill="none" stroke="#25c4d0" stroke-width="1.6" stroke-linejoin="round" /><polygon points="1444.40,67.50 1464.20,67.50 1464.20,87.30 1444.40,87.30 1444.40,67.50" fill="#e9f6f6" opacity=".0"/><polygon points="1451.00,61.30 1470.80,61.30 1470.80,81.10 1451.00,81.10" fill="none" stroke="#06545c" stroke-width="3.0" stroke-linejoin="round" /><line x1="1444.40" y1="67.50" x2="1451.00" y2="61.30" stroke="#06545c" stroke-width="3.0" stroke-linecap="round"/><line x1="1464.20" y1="67.50" x2="1470.80" y2="61.30" stroke="#06545c" stroke-width="3.0" stroke-linecap="round"/><line x1="1464.20" y1="87.30" x2="1470.80" y2="81.10" stroke="#06545c" stroke-width="3.0" stroke-linecap="round"/><line x1="1444.40" y1="87.30" x2="1451.00" y2="81.10" stroke="#06545c" stroke-width="3.0" stroke-linecap="round"/><polygon points="1451.00,61.30 1470.80,61.30 1470.80,81.10 1451.00,81.10" fill="none" stroke="#25c4d0" stroke-width="1.6" stroke-linejoin="round" /><line x1="1444.40" y1="67.50" x2="1451.00" y2="61.30" stroke="#25c4d0" stroke-width="1.6" stroke-linecap="round"/><line x1="1464.20" y1="67.50" x2="1470.80" y2="61.30" stroke="#25c4d0" stroke-width="1.6" stroke-linecap="round"/><line x1="1464.20" y1="87.30" x2="1470.80" y2="81.10" stroke="#25c4d0" stroke-width="1.6" stroke-linecap="round"/><line x1="1444.40" y1="87.30" x2="1451.00" y2="81.10" stroke="#25c4d0" stroke-width="1.6" stroke-linecap="round"/><polygon points="1444.40,67.50 1451.00,61.30 1451.00,81.10 1444.40,87.30" fill="#2ad6de" stroke="#06545c" stroke-width="0.9" stroke-linejoin="round" /><polygon points="1444.40,67.50 1464.20,67.50 1464.20,87.30 1444.40,87.30" fill="none" stroke="#06545c" stroke-width="3.0" stroke-linejoin="round" /><polygon points="1444.40,67.50 1464.20,67.50 1464.20,87.30 1444.40,87.30" fill="none" stroke="#25c4d0" stroke-width="1.6" stroke-linejoin="round" /><polygon points="1488.90,67.40 1496.60,61.60 1512.60,79.00 1505.00,85.40" fill="#2ad6de" stroke="#06545c" stroke-width="1" stroke-linejoin="round" /><polygon points="1505.00,85.40 1506.80,87.60 1512.60,82.40 1512.60,79.00" fill="#12a0ac" stroke="#06545c" stroke-width="1" stroke-linejoin="round" /><line x1="1498.89" y1="64.09" x2="1496.01" y2="66.25" stroke="#06545c" stroke-width="0.9" stroke-linecap="butt"/><line x1="1501.17" y1="66.57" x2="1499.25" y2="68.01" stroke="#06545c" stroke-width="0.9" stroke-linecap="butt"/><line x1="1503.46" y1="69.06" x2="1500.58" y2="71.22" stroke="#06545c" stroke-width="0.9" stroke-linecap="butt"/><line x1="1505.74" y1="71.54" x2="1503.82" y2="72.98" stroke="#06545c" stroke-width="0.9" stroke-linecap="butt"/><line x1="1508.03" y1="74.03" x2="1505.15" y2="76.19" stroke="#06545c" stroke-width="0.9" stroke-linecap="butt"/><line x1="1510.31" y1="76.51" x2="1508.39" y2="77.95" stroke="#06545c" stroke-width="0.9" stroke-linecap="butt"/><polygon points="19.60,110.35 26.13,112.70 26.13,118.71 32.15,121.26 32.15,128.00 19.60,123.41" fill="#edd400" stroke="#302b00" stroke-width="1.02" stroke-linejoin="round" /><polygon points="32.15,121.26 41.02,113.82 41.02,119.63 32.15,128.00" fill="#c8a800" stroke="#302b00" stroke-width="1.02" stroke-linejoin="round" /><polygon points="19.60,110.35 28.88,102.70 35.00,105.45 26.13,112.70" fill="#fce94f" stroke="#302b00" stroke-width="1.02" stroke-linejoin="round" /><polygon points="26.13,112.70 35.00,105.45 35.00,111.27 26.13,118.71" fill="#c8a800" stroke="#302b00" stroke-width="1.02" stroke-linejoin="round" /><polygon points="26.13,118.71 35.00,111.27 41.02,113.82 32.15,121.26" fill="#fce94f" stroke="#302b00" stroke-width="1.02" stroke-linejoin="round" /><path d="M55 105.2 a1 1 0 0 1 1-1 H63 l1.6 2.4 H76 a1 1 0 0 1 1 1 V112 H55Z" fill="#8e8e8e" stroke="#787878" stroke-width="0.8" stroke-linejoin="round" stroke-linecap="round" /><polygon points="57.40,110.40 79.60,110.20 79.00,124.80 56.00,124.80" fill="url(#gBlueF)" stroke="#4a7ab8" stroke-width="1" stroke-linejoin="round" /><path d="M104.4 104.8 H98 a3.4 3.4 0 0 0 -3.4 3.4 V122.2 a3.4 3.4 0 0 0 3.4 3.4 H110.6 a3.4 3.4 0 0 0 3.4 -3.4 V118.6" fill="none" stroke="#17324f" stroke-width="3.8" stroke-linejoin="round" stroke-linecap="round" /><path d="M104.4 104.8 H98 a3.4 3.4 0 0 0 -3.4 3.4 V122.2 a3.4 3.4 0 0 0 3.4 3.4 H110.6 a3.4 3.4 0 0 0 3.4 -3.4 V118.6" fill="none" stroke="#3a6ea8" stroke-width="2.2" stroke-linejoin="round" stroke-linecap="round" /><path d="M100.6 120.4 C100 113 104 108.4 109.4 108 L109.4 103.4 L117.2 110.2 L109.4 117 L109.4 113 C105.4 113 102.6 115.6 100.6 120.4Z" fill="#6ccc22" stroke="#2a6a06" stroke-width="0.9" stroke-linejoin="round" stroke-linecap="round" /><path d="M139.60000000000002 104.8 H133.2 a3.4 3.4 0 0 0 -3.4 3.4 V122.2 a3.4 3.4 0 0 0 3.4 3.4 H145.8 a3.4 3.4 0 0 0 3.4 -3.4 V118.6" fill="none" stroke="#17324f" stroke-width="3.8" stroke-linejoin="round" stroke-linecap="round" /><path d="M139.60000000000002 104.8 H133.2 a3.4 3.4 0 0 0 -3.4 3.4 V122.2 a3.4 3.4 0 0 0 3.4 3.4 H145.8 a3.4 3.4 0 0 0 3.4 -3.4 V118.6" fill="none" stroke="#3a6ea8" stroke-width="2.2" stroke-linejoin="round" stroke-linecap="round" /><path d="M134.0 120.4 C133.4 113 137.4 108.4 142.8 108 L142.8 103.4 L150.6 110.2 L142.8 117 L142.8 113 C138.8 113 136.0 115.6 134.0 120.4Z" fill="#6ccc22" stroke="#2a6a06" stroke-width="0.9" stroke-linejoin="round" stroke-linecap="round" /><polyline points="150.00,103.80 155.60,110.20 150.00,116.60" fill="none" stroke="#2a6a06" stroke-width="3.6" stroke-linecap="round" stroke-linejoin="round" /><polyline points="150.00,103.80 155.60,110.20 150.00,116.60" fill="none" stroke="#6ccc22" stroke-width="2.1" stroke-linecap="round" stroke-linejoin="round" /><polygon points="19.90,151.20 26.30,153.50 26.30,159.40 32.20,161.90 32.20,168.50 19.90,164.00" fill="#4a7fc0" stroke="#0b1521" stroke-width="1.0" stroke-linejoin="round" /><polygon points="32.20,161.90 40.90,154.60 40.90,160.30 32.20,168.50" fill="#2c5aa0" stroke="#0b1521" stroke-width="1.0" stroke-linejoin="round" /><polygon points="19.90,151.20 29.00,143.70 35.00,146.40 26.30,153.50" fill="#729fcf" stroke="#0b1521" stroke-width="1.0" stroke-linejoin="round" /><polygon points="26.30,153.50 35.00,146.40 35.00,152.10 26.30,159.40" fill="#2c5aa0" stroke="#0b1521" stroke-width="1.0" stroke-linejoin="round" /><polygon points="26.30,159.40 35.00,152.10 40.90,154.60 32.20,161.90" fill="#729fcf" stroke="#0b1521" stroke-width="1.0" stroke-linejoin="round" /><path d="M55.8 143.2 H78.4 V164 L74 169.4 H55.8Z" fill="url(#gPage)" stroke="#8a8a8a" stroke-width="1.2" stroke-linejoin="round" stroke-linecap="round" /><polygon points="78.40,164.00 74.00,169.40 74.40,164.60" fill="#c4c4c4" stroke="#8a8a8a" stroke-width="0.7" stroke-linejoin="round" /><rect x="58.40" y="154.60" width="11.40" height="11.40" fill="none" rx="0.6" stroke="#e01818" stroke-width="1.7" /><circle cx="70.70" cy="153.10" r="6.00" fill="none" stroke="#e01818" stroke-width="1.7" /><path d="M101.6 157.2 H94.2 a2 2 0 0 0 -2 2 V166.6 a2 2 0 0 0 2 2 H115.6 a2 2 0 0 0 2 -2 V159.2 a2 2 0 0 0 -2 -2 H108.4" fill="none" stroke="#b0b0b0" stroke-width="2.9" stroke-linejoin="round" stroke-linecap="round" /><path d="M96 160 H114 V166 H96Z" fill="#fff" /><polygon points="100.90,143.20 108.60,143.20 108.60,151.80 112.60,151.80 104.90,160.20 97.20,151.80 100.90,151.80" fill="url(#gGray)" stroke="#a0a0a0" stroke-width="0.9" stroke-linejoin="round" /><polygon points="133.60,146.20 146.40,151.20 146.40,169.20 133.60,164.00" fill="#3b70b6" stroke="#0b1521" stroke-width="0.9" stroke-linejoin="round" /><polygon points="146.40,151.20 155.60,147.80 155.60,165.40 146.40,169.20" fill="#1f4a8a" stroke="#0b1521" stroke-width="0.9" stroke-linejoin="round" /><polygon points="133.60,146.20 142.40,143.00 155.60,147.80 146.40,151.20" fill="#729fcf" stroke="#0b1521" stroke-width="0.9" stroke-linejoin="round" /><polygon points="128.80,146.60 141.20,150.60 141.20,167.60 139.00,168.80 128.80,164.20" fill="#f6f6f4" stroke="#2e2e2e" stroke-width="0.9" stroke-linejoin="round" /><polygon points="131.20,156.00 136.40,157.80 136.40,163.60 131.20,161.40" fill="none" stroke="#e01818" stroke-width="1.2" stroke-linejoin="round" /><ellipse cx="136.20" cy="155.40" rx="3.00" ry="3.60" fill="none" stroke="#e01818" stroke-width="1.2" /><circle cx="186.70" cy="156.50" r="4.50" fill="#3f6fb4" opacity=".85"/><circle cx="186.70" cy="156.50" r="2.50" fill="#ef2929" stroke="#a40000" stroke-width="0.6" /><polyline points="212.80,167.00 234.40,145.40" fill="none" stroke="#0b1521" stroke-width="3.6" stroke-linecap="round" stroke-linejoin="round" /><polyline points="212.80,167.00 234.40,145.40" fill="none" stroke="#4a86d0" stroke-width="1.9" stroke-linecap="round" stroke-linejoin="round" /><circle cx="212.80" cy="167.00" r="2.60" fill="#ef2929" stroke="#7a0000" stroke-width="0.8" /><circle cx="234.40" cy="145.40" r="2.60" fill="#ef2929" stroke="#7a0000" stroke-width="0.8" /><polyline points="263.20,145.40 272.30,154.40 259.40,167.00 250.30,158.00 263.20,145.40" fill="none" stroke="#0b1521" stroke-width="3.6" stroke-linecap="round" stroke-linejoin="round" /><polyline points="263.20,145.40 272.30,154.40 259.40,167.00 250.30,158.00 263.20,145.40" fill="none" stroke="#4a86d0" stroke-width="1.9" stroke-linecap="round" stroke-linejoin="round" /><circle cx="263.20" cy="145.40" r="2.60" fill="#ef2929" stroke="#7a0000" stroke-width="0.8" /><circle cx="272.30" cy="154.40" r="2.60" fill="#ef2929" stroke="#7a0000" stroke-width="0.8" /><circle cx="259.40" cy="167.00" r="2.60" fill="#ef2929" stroke="#7a0000" stroke-width="0.8" /><circle cx="250.30" cy="158.00" r="2.60" fill="#ef2929" stroke="#7a0000" stroke-width="0.8" /><polyline points="296.30,145.40 296.30,158.00" fill="none" stroke="#0b1521" stroke-width="3.6" stroke-linecap="round" stroke-linejoin="round" /><polyline points="296.30,158.00 309.20,158.00" fill="none" stroke="#0b1521" stroke-width="3.6" stroke-linecap="round" stroke-linejoin="round" /><polyline points="296.30,158.00 287.30,167.00" fill="none" stroke="#0b1521" stroke-width="3.6" stroke-linecap="round" stroke-linejoin="round" /><polyline points="296.30,145.40 296.30,158.00 309.20,158.00" fill="none" stroke="#4a86d0" stroke-width="1.9" stroke-linecap="round" stroke-linejoin="round" /><polyline points="296.30,158.00 287.30,167.00" fill="none" stroke="#4a86d0" stroke-width="1.9" stroke-linecap="round" stroke-linejoin="round" /><circle cx="296.30" cy="145.40" r="2.60" fill="#ef2929" stroke="#7a0000" stroke-width="0.8" /><circle cx="296.30" cy="158.00" r="2.60" fill="#ef2929" stroke="#7a0000" stroke-width="0.8" /><circle cx="309.20" cy="158.00" r="2.60" fill="#ef2929" stroke="#7a0000" stroke-width="0.8" /><circle cx="287.30" cy="167.00" r="2.60" fill="#ef2929" stroke="#7a0000" stroke-width="0.8" /><path d="M323.80 146.00C325.23 144.55 329.15 146.88 331.40 146.70C333.65 146.52 334.83 145.45 337.30 144.90C339.77 144.35 344.22 142.73 346.20 143.40C348.18 144.07 348.97 147.00 349.20 148.90C349.43 150.80 348.47 152.98 347.60 154.80C346.73 156.62 344.50 157.88 344.00 159.80C343.50 161.72 345.50 164.73 344.60 166.30C343.70 167.87 341.00 169.17 338.60 169.20C336.20 169.23 332.73 167.45 330.20 166.50C327.67 165.55 324.63 165.35 323.40 163.50C322.17 161.65 322.73 158.32 322.80 155.40C322.87 152.48 322.37 147.45 323.80 146.00Z" fill="url(#gBlobB)" stroke="#0b1521" stroke-width="1" stroke-linejoin="round" stroke-linecap="round" /><circle cx="346.70" cy="145.40" r="2.50" fill="#ef2929" stroke="#7a0000" stroke-width="0.7" /><circle cx="325.00" cy="154.40" r="2.50" fill="#ef2929" stroke="#7a0000" stroke-width="0.7" /><circle cx="343.10" cy="167.00" r="2.50" fill="#ef2929" stroke="#7a0000" stroke-width="0.7" /><path d="M360.60 146.00C362.03 144.55 365.95 146.88 368.20 146.70C370.45 146.52 371.63 145.45 374.10 144.90C376.57 144.35 381.02 142.73 383.00 143.40C384.98 144.07 385.77 147.00 386.00 148.90C386.23 150.80 385.27 152.98 384.40 154.80C383.53 156.62 381.30 157.88 380.80 159.80C380.30 161.72 382.30 164.73 381.40 166.30C380.50 167.87 377.80 169.17 375.40 169.20C373.00 169.23 369.53 167.45 367.00 166.50C364.47 165.55 361.43 165.35 360.20 163.50C358.97 161.65 359.53 158.32 359.60 155.40C359.67 152.48 359.17 147.45 360.60 146.00Z" fill="url(#gBlobG)" stroke="#0b1521" stroke-width="1" stroke-linejoin="round" stroke-linecap="round" /><circle cx="383.50" cy="145.40" r="2.50" fill="#ef2929" stroke="#7a0000" stroke-width="0.7" /><circle cx="361.80" cy="154.40" r="2.50" fill="#ef2929" stroke="#7a0000" stroke-width="0.7" /><circle cx="379.90" cy="167.00" r="2.50" fill="#ef2929" stroke="#7a0000" stroke-width="0.7" /><ellipse cx="400.80" cy="157.60" rx="2.60" ry="6.40" fill="#f57900" stroke="#3a2400" stroke-width="0.9" transform="rotate(28 400.8 157.6)"/><ellipse cx="420.20" cy="157.60" rx="2.60" ry="6.40" fill="#fcb860" stroke="#3a2400" stroke-width="0.9" transform="rotate(-28 420.2 157.6)"/><path d="M404.00 150.00C404.40 148.50 404.57 147.03 405.40 146.00C406.23 144.97 407.83 144.13 409.00 143.80C410.17 143.47 411.23 143.70 412.40 144.00C413.57 144.30 415.13 144.67 416.00 145.60C416.87 146.53 417.27 148.03 417.60 149.60C417.93 151.17 418.17 153.10 418.00 155.00C417.83 156.90 417.27 159.10 416.60 161.00C415.93 162.90 415.02 165.13 414.00 166.40C412.98 167.67 411.67 168.60 410.50 168.60C409.33 168.60 408.02 167.67 407.00 166.40C405.98 165.13 405.07 162.90 404.40 161.00C403.73 159.10 403.07 156.83 403.00 155.00C402.93 153.17 403.60 151.50 404.00 150.00Z" fill="url(#gOr)" stroke="#3a2400" stroke-width="1" stroke-linejoin="round" stroke-linecap="round" /><ellipse cx="407.40" cy="156.60" rx="2.70" ry="2.20" fill="#fff" /><ellipse cx="413.40" cy="156.60" rx="2.40" ry="2.10" fill="#fff" /><circle cx="408.40" cy="156.80" r="1.10" fill="#111" /><circle cx="412.60" cy="156.80" r="1.10" fill="#111" /><polyline points="409.00,164.60 410.50,165.80 412.00,164.60" fill="none" stroke="#3a2400" stroke-width="0.9" stroke-linecap="round" stroke-linejoin="round" /><line x1="410.50" y1="165.80" x2="410.50" y2="167.40" stroke="#3a2400" stroke-width="0.9" stroke-linecap="round"/><polygon points="449.40,164.10 462.00,159.60 474.40,161.40 461.80,168.10" fill="none" stroke="#4c4c4c" stroke-width="3.2" stroke-linejoin="round" /><polygon points="449.40,164.10 462.00,159.60 474.40,161.40 461.80,168.10" fill="none" stroke="#f6f6f6" stroke-width="1.5" stroke-linejoin="round" /><polygon points="449.20,150.30 461.80,154.80 461.80,161.40 449.20,156.90" fill="#f2df28" stroke="#302b00" stroke-width="0.9" stroke-linejoin="round" /><polygon points="461.80,154.80 474.60,147.70 474.60,154.30 461.80,161.40" fill="#c9aa00" stroke="#302b00" stroke-width="0.9" stroke-linejoin="round" /><polygon points="449.20,150.30 462.30,144.00 474.60,147.70 461.80,154.80" fill="#fce94f" stroke="#302b00" stroke-width="0.9" stroke-linejoin="round" /><line x1="486.60" y1="165.20" x2="496.00" y2="158.40" stroke="#7a0000" stroke-width="3.2" stroke-linecap="round"/><line x1="486.60" y1="165.20" x2="496.00" y2="158.40" stroke="#e01818" stroke-width="2" stroke-linecap="round"/><line x1="505.00" y1="151.80" x2="512.60" y2="146.60" stroke="#7a0000" stroke-width="3.2" stroke-linecap="round"/><line x1="505.00" y1="151.80" x2="512.60" y2="146.60" stroke="#e01818" stroke-width="2" stroke-linecap="round"/><path d="M486.4 152 L500.4 144.6 C507 145.6 512 151 513 158.6 L499.6 168.4 L494.6 166.2 L495.4 161.4 C494 158.6 491 157.2 487.6 157.4Z" fill="#edd400" stroke="#302b00" stroke-width="0.9" stroke-linejoin="round" stroke-linecap="round" /><path d="M486.4 152 L500.4 144.6 C507 145.6 512 151 513 158.6 L500 163.6 C499 157.6 494 152.6 486.4 152Z" fill="#fce94f" stroke="#302b00" stroke-width="0.7" stroke-linejoin="round" stroke-linecap="round" /><path d="M500 163.6 L499.6 168.4" fill="none" stroke="#302b00" stroke-width="0.7" stroke-linejoin="round" stroke-linecap="round" /><polygon points="528.80,155.20 533.40,147.20 546.20,149.20 546.20,166.40 531.40,165.20" fill="#edd400" stroke="#302b00" stroke-width="0.8" stroke-linejoin="round" /><polygon points="528.80,155.20 533.40,147.20 546.20,149.20 532.80,155.60" fill="#fce94f" stroke="#302b00" stroke-width="0.6" stroke-linejoin="round" /><polygon points="532.60,155.60 546.20,149.20 546.20,166.40 532.60,165.20" fill="#c8a800" stroke="#302b00" stroke-width="0.6" stroke-linejoin="round" opacity=".55"/><polyline points="532.80,146.40 546.80,148.40 546.80,167.40" fill="none" stroke="#8a0000" stroke-width="3.4" stroke-linecap="round" stroke-linejoin="round" /><polyline points="532.80,146.40 546.80,148.40 546.80,167.40" fill="none" stroke="#e01818" stroke-width="2.2" stroke-linecap="round" stroke-linejoin="round" /><polygon points="525.40,155.40 532.40,156.00 532.40,165.60 525.40,164.60" fill="none" stroke="#8a0000" stroke-width="3.2" stroke-linejoin="round" /><polygon points="525.40,155.40 532.40,156.00 532.40,165.60 525.40,164.60" fill="#edd400" stroke="#e01818" stroke-width="2" stroke-linejoin="round" /><path d="M562.6 159.4 C567.5 155 570 150 571.6 144.8 L583.4 147.4 L586.6 158 C582 163.5 576 167 570 168 L562.6 166.6Z" fill="#edd400" stroke="#302b00" stroke-width="0.8" stroke-linejoin="round" stroke-linecap="round" /><path d="M571.6 144.8 L583.4 147.4 C582 153 577 159 570.4 160.2 L562.6 159.4 C567.5 155 570 150 571.6 144.8Z" fill="#fce94f" stroke="#302b00" stroke-width="0.6" stroke-linejoin="round" stroke-linecap="round" /><ellipse cx="578.50" cy="159.50" rx="1.70" ry="1.00" fill="#c8a800" transform="rotate(-35 578.5 159.5)"/><ellipse cx="574.00" cy="163.50" rx="1.70" ry="1.00" fill="#c8a800" transform="rotate(-25 574.0 163.5)"/><polyline points="570.80,144.60 583.80,147.20 587.00,158.40" fill="none" stroke="#8a0000" stroke-width="3.2" stroke-linecap="round" stroke-linejoin="round" /><polyline points="570.80,144.60 583.80,147.20 587.00,158.40" fill="none" stroke="#e01818" stroke-width="2" stroke-linecap="round" stroke-linejoin="round" /><polygon points="561.20,158.60 569.60,159.80 569.60,168.20 561.20,167.00" fill="none" stroke="#8a0000" stroke-width="3.2" stroke-linejoin="round" /><polygon points="561.20,158.60 569.60,159.80 569.60,168.20 561.20,167.00" fill="#edd400" stroke="#e01818" stroke-width="2" stroke-linejoin="round" /><rect x="560.60" y="162.20" width="4.60" height="2.20" fill="#e01818" rx="1" stroke="#8a0000" stroke-width="0.6" /><ellipse cx="585.60" cy="145.20" rx="1.20" ry="1.90" fill="#e01818" stroke="#8a0000" stroke-width="0.6" transform="rotate(20 585.6 145.2)"/><line x1="598.00" y1="168.00" x2="610.00" y2="158.20" stroke="#8a0000" stroke-width="3.2" stroke-linecap="round"/><line x1="598.00" y1="168.00" x2="610.00" y2="158.20" stroke="#e01818" stroke-width="2" stroke-linecap="round"/><path d="M611 150 C612 144 618 141.8 619.2 144.2 C620 146.4 617.5 149.5 614.2 151.6Z" fill="#c8a800" stroke="#302b00" stroke-width="0.8" stroke-linejoin="round" stroke-linecap="round" /><path d="M601.2 157.6 C601.2 150.5 611 147.2 617.6 151 C623.4 154.4 621.6 161.6 615.6 161.8 C611.8 161.8 610.2 158.6 612.8 156.6 C610 153.6 604.6 155 605 160 C605.4 164 609 167.6 611.4 168.6 C608 170 601.4 164.6 601.2 157.6Z" fill="#edd400" stroke="#302b00" stroke-width="0.9" stroke-linejoin="round" stroke-linecap="round" /><path d="M603 156.6 C604 151.6 611.6 149.4 616.8 152.4" fill="none" stroke="#fce94f" stroke-width="1.4" stroke-linejoin="round" stroke-linecap="round" /><path d="M610.6 161 C613.4 163.4 613.4 167.6 611.4 168.6 C609.4 167.6 608 164 608.4 161.4Z" fill="#c8a800" stroke="#302b00" stroke-width="0.8" stroke-linejoin="round" stroke-linecap="round" /><line x1="610.60" y1="157.60" x2="624.00" y2="146.60" stroke="#8a0000" stroke-width="3.2" stroke-linecap="round"/><line x1="610.60" y1="157.60" x2="624.00" y2="146.60" stroke="#e01818" stroke-width="2" stroke-linecap="round"/><polygon points="637.50,148.90 650.70,150.30 650.70,167.10 637.50,165.10" fill="#fce94f" stroke="#302b00" stroke-width="0.9" stroke-linejoin="round" /><polygon points="650.70,150.30 660.30,147.10 660.10,163.00 650.70,167.10" fill="#c8a800" stroke="#302b00" stroke-width="0.9" stroke-linejoin="round" /><polygon points="637.50,148.90 648.00,144.80 660.30,147.10 650.70,150.30" fill="#fce94f" stroke="#302b00" stroke-width="0.9" stroke-linejoin="round" /><polyline points="650.70,150.30 650.70,167.10" fill="none" stroke="#7a0000" stroke-width="3" stroke-linecap="round" stroke-linejoin="round" /><polyline points="637.50,165.10 650.70,167.10 660.10,163.00" fill="none" stroke="#7a0000" stroke-width="3" stroke-linecap="round" stroke-linejoin="round" /><polyline points="650.70,150.30 650.70,167.10" fill="none" stroke="#e01818" stroke-width="1.8" stroke-linecap="round" stroke-linejoin="round" /><polyline points="637.50,165.10 650.70,167.10 660.10,163.00" fill="none" stroke="#e01818" stroke-width="1.8" stroke-linecap="round" stroke-linejoin="round" /><circle cx="650.70" cy="150.30" r="2.50" fill="#ef2929" stroke="#7a0000" stroke-width="0.8" /><circle cx="637.50" cy="165.10" r="2.50" fill="#ef2929" stroke="#7a0000" stroke-width="0.8" /><circle cx="650.70" cy="167.10" r="2.50" fill="#ef2929" stroke="#7a0000" stroke-width="0.8" /><circle cx="660.10" cy="163.00" r="2.50" fill="#ef2929" stroke="#7a0000" stroke-width="0.8" /><polygon points="694.30,155.90 707.20,161.20 707.20,168.50 694.30,163.20" fill="#4a7fc0" stroke="#0b1521" stroke-width="0.9" stroke-linejoin="round" /><polygon points="707.20,161.20 720.50,149.80 720.50,157.10 707.20,168.50" fill="#2c5aa0" stroke="#0b1521" stroke-width="0.9" stroke-linejoin="round" /><polygon points="694.30,155.90 707.20,145.40 720.50,149.80 707.20,161.20" fill="#729fcf" stroke="#0b1521" stroke-width="0.9" stroke-linejoin="round" /><polygon points="699.60,154.80 707.20,148.30 715.40,151.00 707.20,158.00" fill="#cc0000" stroke="#280000" stroke-width="0.8" stroke-linejoin="round" /><polygon points="707.20,148.30 715.40,151.00 707.20,153.40" fill="#ef2929" /><polygon points="699.60,154.80 707.20,148.30 707.20,153.40" fill="#a40000" /><polygon points="731.50,143.60 747.70,147.70 747.70,169.40 731.50,165.30" fill="#3f77ba" stroke="#0b1521" stroke-width="0.9" stroke-linejoin="round" /><polygon points="747.70,147.70 757.90,147.10 757.90,167.70 747.70,169.40" fill="#2a5a9e" stroke="#0b1521" stroke-width="0.9" stroke-linejoin="round" /><polygon points="731.50,143.60 741.20,142.60 757.90,147.10 747.70,147.70" fill="#729fcf" stroke="#0b1521" stroke-width="0.9" stroke-linejoin="round" /><ellipse cx="740.00" cy="156.00" rx="6.30" ry="8.40" fill="#d40f0f" stroke="#280000" stroke-width="0.9" transform="rotate(-8 740 156)"/><path d="M743.6 150.6 C746.4 153.6 746.4 159.4 744 162.6 C743 159 743 154 743.6 150.6Z" fill="#f4f4f4" /><path d="M736.4 151 C734.4 155 735.4 161 738.4 163.4" fill="none" stroke="#8a0000" stroke-width="1.6" stroke-linejoin="round" stroke-linecap="round" /><line x1="768.60" y1="165.20" x2="778.00" y2="158.40" stroke="#7a0000" stroke-width="3.2" stroke-linecap="round"/><line x1="768.60" y1="165.20" x2="778.00" y2="158.40" stroke="#e01818" stroke-width="2" stroke-linecap="round"/><line x1="787.00" y1="151.80" x2="794.60" y2="146.60" stroke="#7a0000" stroke-width="3.2" stroke-linecap="round"/><line x1="787.00" y1="151.80" x2="794.60" y2="146.60" stroke="#e01818" stroke-width="2" stroke-linecap="round"/><path d="M768 150.4 L780 144.2 C788 146 794 152 795 160 L782.6 168.6 L776 166 C776.4 159 773 153.4 768 150.4Z" fill="#4a7fc0" stroke="#0b1521" stroke-width="0.9" stroke-linejoin="round" stroke-linecap="round" /><path d="M771.8 148.4 L776.6 146 C783.6 149.6 787.4 156 788 164.6 L782.8 168.2 C782.6 159.6 778.6 152.4 771.8 148.4Z" fill="#dc1010" stroke="#280000" stroke-width="0.8" stroke-linejoin="round" stroke-linecap="round" /><path d="M768 150.4 L771.8 148.4 C778.6 152.4 782.6 159.6 782.8 168.2 L776 166 C776.4 159 773 153.4 768 150.4Z" fill="#729fcf" stroke="#0b1521" stroke-width="0.8" stroke-linejoin="round" stroke-linecap="round" /><polygon points="811.60,155.20 816.20,147.20 829.00,149.20 829.00,166.40 814.20,165.20" fill="#dc1010" stroke="#280000" stroke-width="0.8" stroke-linejoin="round" /><polygon points="811.60,155.20 816.20,147.20 829.00,149.20 815.60,155.60" fill="#ef2929" stroke="#280000" stroke-width="0.6" stroke-linejoin="round" /><polygon points="815.40,155.60 829.00,149.20 829.00,166.40 815.40,165.20" fill="#b00000" stroke="#280000" stroke-width="0.6" stroke-linejoin="round" opacity=".55"/><polyline points="815.60,146.40 829.60,148.40 829.60,167.40" fill="none" stroke="#1c3a6a" stroke-width="3.4" stroke-linecap="round" stroke-linejoin="round" /><polyline points="815.60,146.40 829.60,148.40 829.60,167.40" fill="none" stroke="#5a8ad0" stroke-width="2.2" stroke-linecap="round" stroke-linejoin="round" /><polygon points="808.20,155.40 815.20,156.00 815.20,165.60 808.20,164.60" fill="none" stroke="#1c3a6a" stroke-width="3.2" stroke-linejoin="round" /><polygon points="808.20,155.40 815.20,156.00 815.20,165.60 808.20,164.60" fill="#dc1010" stroke="#5a8ad0" stroke-width="2" stroke-linejoin="round" /><path d="M845.0 159.4 C849.9 155 852.4 150 854.0 144.8 L865.8 147.4 L869.0 158 C864.4 163.5 858.4 167 852.4 168 L845.0 166.6Z" fill="#dc1010" stroke="#280000" stroke-width="0.8" stroke-linejoin="round" stroke-linecap="round" /><path d="M854.0 144.8 L865.8 147.4 C864.4 153 859.4 159 852.8 160.2 L845.0 159.4 C849.9 155 852.4 150 854.0 144.8Z" fill="#ef2929" stroke="#280000" stroke-width="0.6" stroke-linejoin="round" stroke-linecap="round" /><ellipse cx="860.90" cy="159.50" rx="1.70" ry="1.00" fill="#b00000" transform="rotate(-35 860.9 159.5)"/><ellipse cx="856.40" cy="163.50" rx="1.70" ry="1.00" fill="#b00000" transform="rotate(-25 856.4 163.5)"/><polyline points="853.20,144.60 866.20,147.20 869.40,158.40" fill="none" stroke="#1c3a6a" stroke-width="3.2" stroke-linecap="round" stroke-linejoin="round" /><polyline points="853.20,144.60 866.20,147.20 869.40,158.40" fill="none" stroke="#5a8ad0" stroke-width="2" stroke-linecap="round" stroke-linejoin="round" /><polygon points="843.60,158.60 852.00,159.80 852.00,168.20 843.60,167.00" fill="none" stroke="#1c3a6a" stroke-width="3.2" stroke-linejoin="round" /><polygon points="843.60,158.60 852.00,159.80 852.00,168.20 843.60,167.00" fill="#dc1010" stroke="#5a8ad0" stroke-width="2" stroke-linejoin="round" /><rect x="843.00" y="162.20" width="4.60" height="2.20" fill="#5a8ad0" rx="1" stroke="#1c3a6a" stroke-width="0.6" /><ellipse cx="868.00" cy="145.20" rx="1.20" ry="1.90" fill="#5a8ad0" stroke="#1c3a6a" stroke-width="0.6" transform="rotate(20 868.0 145.2)"/><line x1="881.00" y1="168.00" x2="893.00" y2="158.20" stroke="#8a0000" stroke-width="3.2" stroke-linecap="round"/><line x1="881.00" y1="168.00" x2="893.00" y2="158.20" stroke="#e01818" stroke-width="2" stroke-linecap="round"/><path d="M894 150 C895 144 901 141.8 902.2 144.2 C903 146.4 900.5 149.5 897.2 151.6Z" fill="#2c5aa0" stroke="#0b1521" stroke-width="0.8" stroke-linejoin="round" stroke-linecap="round" /><path d="M884.2 157.6 C884.2 150.5 894 147.2 900.6 151 C906.4 154.4 904.6 161.6 898.6 161.8 C894.8 161.8 893.2 158.6 895.8 156.6 C893 153.6 887.6 155 888 160 C888.4 164 892 167.6 894.4 168.6 C891 170 884.4 164.6 884.2 157.6Z" fill="#4a7fc0" stroke="#0b1521" stroke-width="0.9" stroke-linejoin="round" stroke-linecap="round" /><path d="M886 156.6 C887 151.6 894.6 149.4 899.8 152.4" fill="none" stroke="#729fcf" stroke-width="1.4" stroke-linejoin="round" stroke-linecap="round" /><path d="M893.6 161 C896.4 163.4 896.4 167.6 894.4 168.6 C892.4 167.6 891 164 891.4 161.4Z" fill="#2c5aa0" stroke="#0b1521" stroke-width="0.8" stroke-linejoin="round" stroke-linecap="round" /><line x1="893.60" y1="157.60" x2="907.00" y2="146.60" stroke="#8a0000" stroke-width="3.2" stroke-linecap="round"/><line x1="893.60" y1="157.60" x2="907.00" y2="146.60" stroke="#e01818" stroke-width="2" stroke-linecap="round"/><polygon points="919.90,149.10 933.10,150.50 933.10,167.30 919.90,165.30" fill="#dc1010" stroke="#280000" stroke-width="0.9" stroke-linejoin="round" /><polygon points="933.10,150.50 942.70,147.30 942.50,163.20 933.10,167.30" fill="#b00000" stroke="#280000" stroke-width="0.9" stroke-linejoin="round" /><polygon points="919.90,149.10 930.40,145.00 942.70,147.30 933.10,150.50" fill="#ef2929" stroke="#280000" stroke-width="0.9" stroke-linejoin="round" /><polyline points="933.10,150.50 933.10,167.30" fill="none" stroke="#1c3a6a" stroke-width="3" stroke-linecap="round" stroke-linejoin="round" /><polyline points="919.90,165.30 933.10,167.30 942.50,163.20" fill="none" stroke="#1c3a6a" stroke-width="3" stroke-linecap="round" stroke-linejoin="round" /><polyline points="933.10,150.50 933.10,167.30" fill="none" stroke="#4a7ac0" stroke-width="1.8" stroke-linecap="round" stroke-linejoin="round" /><polyline points="919.90,165.30 933.10,167.30 942.50,163.20" fill="none" stroke="#4a7ac0" stroke-width="1.8" stroke-linecap="round" stroke-linejoin="round" /><circle cx="933.10" cy="150.50" r="2.50" fill="#5a8ad0" stroke="#1c3a6a" stroke-width="0.8" /><circle cx="919.90" cy="165.30" r="2.50" fill="#5a8ad0" stroke="#1c3a6a" stroke-width="0.8" /><circle cx="933.10" cy="167.30" r="2.50" fill="#5a8ad0" stroke="#1c3a6a" stroke-width="0.8" /><circle cx="942.50" cy="163.20" r="2.50" fill="#5a8ad0" stroke="#1c3a6a" stroke-width="0.8" /><rect x="1011.50" y="140.50" width="30.00" height="31.00" fill="#cfe4f7" stroke="#a4ccee" stroke-width="1" /><polygon points="976.60,169.60 976.60,156.30 981.60,154.30 996.00,145.10 1003.60,147.30 1003.60,169.60" fill="url(#gBlueL)" stroke="#0b1521" stroke-width="1" stroke-linejoin="round" /><polyline points="976.60,164.50 988.60,169.30" fill="none" stroke="#0b1521" stroke-width="0.8" stroke-linecap="round" stroke-linejoin="round" /><polyline points="977.00,162.90 1003.60,163.90" fill="none" stroke="#2a5a9c" stroke-width="0.6" stroke-linecap="round" stroke-linejoin="round" /><polygon points="980.80,149.00 984.40,143.60 988.60,147.00 988.60,160.20 983.00,163.60 980.80,161.00" fill="#3b70b6" stroke="#0b1521" stroke-width="0.8" stroke-linejoin="round" /><polygon points="984.40,143.60 988.60,147.00 991.00,146.20 991.00,158.00" fill="#729fcf" stroke="#0b1521" stroke-width="0.7" stroke-linejoin="round" opacity=".9"/><line x1="978.60" y1="166.60" x2="981.40" y2="165.00" stroke="#7a0000" stroke-width="2.6" stroke-linecap="round"/><line x1="978.60" y1="166.60" x2="981.40" y2="165.00" stroke="#ef2929" stroke-width="1.5" stroke-linecap="round"/><line x1="986.40" y1="162.00" x2="988.40" y2="160.80" stroke="#7a0000" stroke-width="2.6" stroke-linecap="round"/><line x1="986.40" y1="162.00" x2="988.40" y2="160.80" stroke="#ef2929" stroke-width="1.5" stroke-linecap="round"/><line x1="1001.00" y1="152.60" x2="1003.00" y2="151.40" stroke="#7a0000" stroke-width="2.6" stroke-linecap="round"/><line x1="1001.00" y1="152.60" x2="1003.00" y2="151.40" stroke="#ef2929" stroke-width="1.5" stroke-linecap="round"/><path d="M990 155.6 L996.4 151.2 L1002.6 155.4 V163.6 C1002.6 166.4 990 166.4 990 163.6Z" fill="url(#gYelH)" stroke="#302b00" stroke-width="0.8" stroke-linejoin="round" stroke-linecap="round" /><path d="M990 155.8 C990 158.6 1002.6 158.6 1002.6 155.6" fill="none" stroke="#302b00" stroke-width="0.7" stroke-linejoin="round" stroke-linecap="round" /><polygon points="1013.30,169.60 1013.30,156.30 1018.30,154.30 1032.70,145.10 1040.30,147.30 1040.30,169.60" fill="url(#gBlueL)" stroke="#0b1521" stroke-width="1" stroke-linejoin="round" /><polyline points="1013.30,164.50 1025.30,169.30" fill="none" stroke="#0b1521" stroke-width="0.8" stroke-linecap="round" stroke-linejoin="round" /><polyline points="1013.70,162.90 1040.30,163.90" fill="none" stroke="#2a5a9c" stroke-width="0.6" stroke-linecap="round" stroke-linejoin="round" /><polygon points="1013.90,152.45 1017.80,154.60 1017.80,158.69 1013.90,156.55" fill="#4a7fc0" stroke="#0b1521" stroke-width="0.8" stroke-linejoin="round" /><polygon points="1017.80,154.60 1021.70,152.45 1021.70,156.55 1017.80,158.69" fill="#2c5aa0" stroke="#0b1521" stroke-width="0.8" stroke-linejoin="round" /><polygon points="1017.80,150.31 1021.70,152.45 1017.80,154.60 1013.90,152.45" fill="#729fcf" stroke="#0b1521" stroke-width="0.8" stroke-linejoin="round" /><polygon points="1022.70,152.03 1027.00,154.40 1027.00,158.91 1022.70,156.55" fill="#edd400" stroke="#302b00" stroke-width="0.8" stroke-linejoin="round" /><polygon points="1027.00,154.40 1031.30,152.03 1031.30,156.55 1027.00,158.91" fill="#c8a800" stroke="#302b00" stroke-width="0.8" stroke-linejoin="round" /><polygon points="1027.00,149.67 1031.30,152.03 1027.00,154.40 1022.70,152.03" fill="#fce94f" stroke="#302b00" stroke-width="0.8" stroke-linejoin="round" /><polygon points="1031.50,152.03 1035.80,154.40 1035.80,158.91 1031.50,156.55" fill="#edd400" stroke="#302b00" stroke-width="0.8" stroke-linejoin="round" /><polygon points="1035.80,154.40 1040.10,152.03 1040.10,156.55 1035.80,158.91" fill="#c8a800" stroke="#302b00" stroke-width="0.8" stroke-linejoin="round" /><polygon points="1035.80,149.67 1040.10,152.03 1035.80,154.40 1031.50,152.03" fill="#fce94f" stroke="#302b00" stroke-width="0.8" stroke-linejoin="round" /><polygon points="1051.20,169.60 1051.20,156.30 1056.20,154.30 1070.60,145.10 1078.20,147.30 1078.20,169.60" fill="url(#gBlueL)" stroke="#0b1521" stroke-width="1" stroke-linejoin="round" /><polyline points="1051.20,164.50 1063.20,169.30" fill="none" stroke="#0b1521" stroke-width="0.8" stroke-linecap="round" stroke-linejoin="round" /><polyline points="1051.60,162.90 1078.20,163.90" fill="none" stroke="#2a5a9c" stroke-width="0.6" stroke-linecap="round" stroke-linejoin="round" /><polygon points="1062.30,147.78 1065.60,149.60 1065.60,153.06 1062.30,151.25" fill="#edd400" stroke="#302b00" stroke-width="0.7" stroke-linejoin="round" /><polygon points="1065.60,149.60 1068.90,147.78 1068.90,151.25 1065.60,153.06" fill="#c8a800" stroke="#302b00" stroke-width="0.7" stroke-linejoin="round" /><polygon points="1065.60,145.97 1068.90,147.78 1065.60,149.60 1062.30,147.78" fill="#fce94f" stroke="#302b00" stroke-width="0.7" stroke-linejoin="round" /><polygon points="1069.70,150.78 1073.00,152.60 1073.00,156.06 1069.70,154.25" fill="#edd400" stroke="#302b00" stroke-width="0.7" stroke-linejoin="round" /><polygon points="1073.00,152.60 1076.30,150.78 1076.30,154.25 1073.00,156.06" fill="#c8a800" stroke="#302b00" stroke-width="0.7" stroke-linejoin="round" /><polygon points="1073.00,148.97 1076.30,150.78 1073.00,152.60 1069.70,150.78" fill="#fce94f" stroke="#302b00" stroke-width="0.7" stroke-linejoin="round" /><polygon points="1056.30,152.59 1059.60,154.40 1059.60,157.87 1056.30,156.05" fill="#edd400" stroke="#302b00" stroke-width="0.7" stroke-linejoin="round" /><polygon points="1059.60,154.40 1062.90,152.59 1062.90,156.05 1059.60,157.87" fill="#c8a800" stroke="#302b00" stroke-width="0.7" stroke-linejoin="round" /><polygon points="1059.60,150.77 1062.90,152.59 1059.60,154.40 1056.30,152.59" fill="#fce94f" stroke="#302b00" stroke-width="0.7" stroke-linejoin="round" /><polygon points="1070.30,156.38 1073.60,158.20 1073.60,161.66 1070.30,159.85" fill="#edd400" stroke="#302b00" stroke-width="0.7" stroke-linejoin="round" /><polygon points="1073.60,158.20 1076.90,156.38 1076.90,159.85 1073.60,161.66" fill="#c8a800" stroke="#302b00" stroke-width="0.7" stroke-linejoin="round" /><polygon points="1073.60,154.57 1076.90,156.38 1073.60,158.20 1070.30,156.38" fill="#fce94f" stroke="#302b00" stroke-width="0.7" stroke-linejoin="round" /><polygon points="1056.30,158.78 1059.60,160.60 1059.60,164.06 1056.30,162.25" fill="#4a7fc0" stroke="#0b1521" stroke-width="0.7" stroke-linejoin="round" /><polygon points="1059.60,160.60 1062.90,158.78 1062.90,162.25 1059.60,164.06" fill="#2c5aa0" stroke="#0b1521" stroke-width="0.7" stroke-linejoin="round" /><polygon points="1059.60,156.97 1062.90,158.78 1059.60,160.60 1056.30,158.78" fill="#729fcf" stroke="#0b1521" stroke-width="0.7" stroke-linejoin="round" /><polygon points="1063.50,160.59 1066.80,162.40 1066.80,165.87 1063.50,164.05" fill="#edd400" stroke="#302b00" stroke-width="0.7" stroke-linejoin="round" /><polygon points="1066.80,162.40 1070.10,160.59 1070.10,164.05 1066.80,165.87" fill="#c8a800" stroke="#302b00" stroke-width="0.7" stroke-linejoin="round" /><polygon points="1066.80,158.77 1070.10,160.59 1066.80,162.40 1063.50,160.59" fill="#fce94f" stroke="#302b00" stroke-width="0.7" stroke-linejoin="round" /><polygon points="1088.20,169.60 1088.20,156.30 1093.20,154.30 1107.60,145.10 1115.20,147.30 1115.20,169.60" fill="url(#gBlueL)" stroke="#0b1521" stroke-width="1" stroke-linejoin="round" /><polyline points="1088.20,164.50 1100.20,169.30" fill="none" stroke="#0b1521" stroke-width="0.8" stroke-linecap="round" stroke-linejoin="round" /><polyline points="1088.60,162.90 1115.20,163.90" fill="none" stroke="#2a5a9c" stroke-width="0.6" stroke-linecap="round" stroke-linejoin="round" /><polygon points="1101.20,145.95 1108.20,149.80 1108.20,157.15 1101.20,153.30" fill="#edd400" stroke="#302b00" stroke-width="0.8" stroke-linejoin="round" /><polygon points="1108.20,149.80 1115.20,145.95 1115.20,153.30 1108.20,157.15" fill="#c8a800" stroke="#302b00" stroke-width="0.8" stroke-linejoin="round" /><polygon points="1108.20,142.10 1115.20,145.95 1108.20,149.80 1101.20,145.95" fill="#fce94f" stroke="#302b00" stroke-width="0.8" stroke-linejoin="round" /><polygon points="1090.20,147.53 1093.60,149.40 1093.60,152.97 1090.20,151.10" fill="#edd400" stroke="#302b00" stroke-width="0.7" stroke-linejoin="round" /><polygon points="1093.60,149.40 1097.00,147.53 1097.00,151.10 1093.60,152.97" fill="#c8a800" stroke="#302b00" stroke-width="0.7" stroke-linejoin="round" /><polygon points="1093.60,145.66 1097.00,147.53 1093.60,149.40 1090.20,147.53" fill="#fce94f" stroke="#302b00" stroke-width="0.7" stroke-linejoin="round" /><polygon points="1093.40,159.73 1096.80,161.60 1096.80,165.17 1093.40,163.30" fill="#4a7fc0" stroke="#0b1521" stroke-width="0.7" stroke-linejoin="round" /><polygon points="1096.80,161.60 1100.20,159.73 1100.20,163.30 1096.80,165.17" fill="#2c5aa0" stroke="#0b1521" stroke-width="0.7" stroke-linejoin="round" /><polygon points="1096.80,157.86 1100.20,159.73 1096.80,161.60 1093.40,159.73" fill="#729fcf" stroke="#0b1521" stroke-width="0.7" stroke-linejoin="round" /><polygon points="1102.60,157.85 1107.60,160.60 1107.60,165.85 1102.60,163.10" fill="#edd400" stroke="#302b00" stroke-width="0.8" stroke-linejoin="round" /><polygon points="1107.60,160.60 1112.60,157.85 1112.60,163.10 1107.60,165.85" fill="#c8a800" stroke="#302b00" stroke-width="0.8" stroke-linejoin="round" /><polygon points="1107.60,155.10 1112.60,157.85 1107.60,160.60 1102.60,157.85" fill="#fce94f" stroke="#302b00" stroke-width="0.8" stroke-linejoin="round" /><path d="M1133 156.2 C1133 148.4 1140 145.4 1147.4 143.9 L1159.6 148.6 V159.4 L1146 168.6 L1133 164.2Z" fill="#4a7fc0" stroke="#0b1521" stroke-width="0.9" stroke-linejoin="round" stroke-linecap="round" /><path d="M1146 168.6 V160.6 C1146 154 1152 149.6 1159.6 148.6 V159.4Z" fill="#2c5aa0" stroke="#0b1521" stroke-width="0.9" stroke-linejoin="round" stroke-linecap="round" /><path d="M1133 156.2 C1133 148.4 1140 145.4 1147.4 143.9 L1159.6 148.6 C1152 149.6 1146 154 1146 160.6Z" fill="#729fcf" stroke="#0b1521" stroke-width="0.9" stroke-linejoin="round" stroke-linecap="round" /><path d="M1133.6 156.6 C1133.6 150.4 1138.4 147.2 1143.6 146 L1154.6 150 C1149 152 1146 156 1145.6 160.4Z" fill="url(#gRed)" stroke="#280000" stroke-width="0.8" stroke-linejoin="round" stroke-linecap="round" /><polygon points="1134.40,160.00 1144.60,163.40 1144.60,165.80 1134.40,162.40" fill="#5a8fd4" /><polygon points="1170.00,159.60 1184.60,143.90 1196.60,148.60 1196.60,159.40 1183.00,168.60 1170.00,164.20" fill="#4a7fc0" stroke="#0b1521" stroke-width="0.9" stroke-linejoin="round" /><polygon points="1183.00,168.60 1183.00,160.60 1196.60,148.60 1196.60,159.40" fill="#2c5aa0" stroke="#0b1521" stroke-width="0.9" stroke-linejoin="round" /><polygon points="1170.00,159.60 1184.60,143.90 1196.60,148.60 1183.00,160.60" fill="#729fcf" stroke="#0b1521" stroke-width="0.9" stroke-linejoin="round" /><polygon points="1171.60,158.80 1181.60,147.60 1191.60,151.20 1182.40,160.40" fill="url(#gRed)" stroke="#280000" stroke-width="0.8" stroke-linejoin="round" /><polygon points="1171.40,161.60 1181.60,164.40 1181.60,166.60 1171.40,163.60" fill="#5a8fd4" /><polygon points="1220.60,142.80 1234.20,148.20 1234.20,163.00 1220.60,169.40 1207.20,163.00 1207.20,148.20" fill="#4a7fc4" stroke="#0b1521" stroke-width="0.9" stroke-linejoin="round" /><polygon points="1220.60,142.80 1234.20,148.20 1220.60,153.80 1207.20,148.20" fill="#729fcf" stroke="#0b1521" stroke-width="0.8" stroke-linejoin="round" /><polygon points="1210.40,151.80 1219.20,155.40 1219.20,164.60 1212.00,162.00" fill="#e01414" stroke="#280000" stroke-width="0.7" stroke-linejoin="round" /><polygon points="1222.00,155.40 1231.40,151.40 1230.00,161.60 1222.00,164.60" fill="#c00808" stroke="#280000" stroke-width="0.7" stroke-linejoin="round" /><polygon points="1212.00,149.80 1230.00,149.00 1220.60,152.80" fill="#e01414" stroke="#280000" stroke-width="0.6" stroke-linejoin="round" /><line x1="1220.60" y1="153.80" x2="1220.60" y2="169.40" stroke="#0b1521" stroke-width="0.9" stroke-linecap="round"/><polygon points="1214.00,164.40 1220.60,167.00 1227.00,164.40 1220.60,166.00" fill="#f0f0f0" /><polygon points="1249.00,144.80 1259.40,142.80 1271.20,147.60 1271.20,162.40 1260.00,169.20 1244.80,165.00" fill="#4a7fc4" stroke="#0b1521" stroke-width="0.9" stroke-linejoin="round" /><polygon points="1252.40,148.00 1258.60,146.40 1258.60,161.00 1250.40,162.60" fill="#c00808" stroke="#280000" stroke-width="0.7" stroke-linejoin="round" /><polygon points="1258.60,146.40 1268.20,149.60 1267.00,158.60 1258.60,161.00" fill="#ec1c1c" stroke="#280000" stroke-width="0.7" stroke-linejoin="round" /><polygon points="1250.40,162.60 1258.60,161.00 1267.00,158.60 1260.40,165.60" fill="#e01414" stroke="#280000" stroke-width="0.7" stroke-linejoin="round" /><circle cx="1306.90" cy="153.40" r="8.40" fill="#5f93d2" stroke="#13294a" stroke-width="0.9" /><circle cx="1298.00" cy="160.10" r="8.80" fill="url(#gSph)" stroke="#13294a" stroke-width="0.9" /><polygon points="1356.00,163.60 1366.40,165.40 1367.40,168.60 1365.60,169.00 1365.00,167.20 1355.00,165.60" fill="#e8d020" stroke="#5a5a1a" stroke-width="0.7" stroke-linejoin="round" /><polygon points="1366.20,165.20 1367.60,168.80 1365.80,169.20" fill="#c8c8c8" stroke="#5a5a5a" stroke-width="0.6" stroke-linejoin="round" /><polygon points="1340.60,145.60 1354.60,143.00 1360.60,148.40 1361.00,163.00 1357.40,165.60 1343.00,163.40" fill="#d9dcd6" stroke="#4a4c48" stroke-width="1" stroke-linejoin="round" /><polygon points="1354.60,143.00 1360.60,148.40 1361.00,163.00 1357.40,165.60 1356.40,148.20" fill="#b4b7b1" stroke="#4a4c48" stroke-width="0.8" stroke-linejoin="round" /><polyline points="1340.60,145.60 1356.40,148.20 1360.60,148.40" fill="none" stroke="#4a4c48" stroke-width="0.8" stroke-linecap="round" stroke-linejoin="round" /><rect x="1357.60" y="152.00" width="2.20" height="6.60" fill="#e8d020" rx="0.8" stroke="#5a5a1a" stroke-width="0.5" /><path d="M1341.6000000000001 154.7 A6.3 6.3 0 0 1 1354.2 154.7Z" fill="#edd400" stroke="#3a3a2a" stroke-width="0.8" stroke-linejoin="round" stroke-linecap="round" /><path d="M1341.6000000000001 154.7 A6.3 6.3 0 0 0 1354.2 154.7Z" fill="#5c5e5a" stroke="#3a3a2a" stroke-width="0.8" stroke-linejoin="round" stroke-linecap="round" /><polygon points="1393.40,163.60 1403.80,165.40 1404.80,168.60 1403.00,169.00 1402.40,167.20 1392.40,165.60" fill="#e8d020" stroke="#5a5a1a" stroke-width="0.7" stroke-linejoin="round" /><polygon points="1403.60,165.20 1405.00,168.80 1403.20,169.20" fill="#c8c8c8" stroke="#5a5a5a" stroke-width="0.6" stroke-linejoin="round" /><polygon points="1378.00,145.60 1392.00,143.00 1398.00,148.40 1398.40,163.00 1394.80,165.60 1380.40,163.40" fill="#d9dcd6" stroke="#4a4c48" stroke-width="1" stroke-linejoin="round" /><polygon points="1392.00,143.00 1398.00,148.40 1398.40,163.00 1394.80,165.60 1393.80,148.20" fill="#b4b7b1" stroke="#4a4c48" stroke-width="0.8" stroke-linejoin="round" /><polyline points="1378.00,145.60 1393.80,148.20 1398.00,148.40" fill="none" stroke="#4a4c48" stroke-width="0.8" stroke-linecap="round" stroke-linejoin="round" /><rect x="1395.00" y="152.00" width="2.20" height="6.60" fill="#e8d020" rx="0.8" stroke="#5a5a1a" stroke-width="0.5" /><path d="M1379.0000000000002 154.7 A6.3 6.3 0 0 1 1391.6000000000001 154.7Z" fill="#edd400" stroke="#3a3a2a" stroke-width="0.8" stroke-linejoin="round" stroke-linecap="round" /><path d="M1379.0000000000002 154.7 A6.3 6.3 0 0 0 1391.6000000000001 154.7Z" fill="#5c5e5a" stroke="#3a3a2a" stroke-width="0.8" stroke-linejoin="round" stroke-linecap="round" /><path d="M1386 147 C1390 142 1398 142.6 1400.6 149.4 L1402.6 148.4 L1401.2 154 L1396.2 151.4 L1398.2 150.6 C1396.4 146.4 1391 146 1388 149Z" fill="#3a78c8" stroke="#12305a" stroke-width="0.8" stroke-linejoin="round" stroke-linecap="round" /><polyline points="1380.00,146.40 1384.80,166.40 1403.20,156.60" fill="none" stroke="#7a0000" stroke-width="3.6" stroke-linecap="round" stroke-linejoin="round" /><polyline points="1380.00,146.40 1384.80,166.40 1403.20,156.60" fill="none" stroke="#ec1c1c" stroke-width="2.2" stroke-linecap="round" stroke-linejoin="round" /><polygon points="1437.60,163.60 1448.00,165.40 1449.00,168.60 1447.20,169.00 1446.60,167.20 1436.60,165.60" fill="#e8d020" stroke="#5a5a1a" stroke-width="0.7" stroke-linejoin="round" /><polygon points="1447.80,165.20 1449.20,168.80 1447.40,169.20" fill="#c8c8c8" stroke="#5a5a5a" stroke-width="0.6" stroke-linejoin="round" /><polygon points="1422.20,145.60 1436.20,143.00 1442.20,148.40 1442.60,163.00 1439.00,165.60 1424.60,163.40" fill="#d9dcd6" stroke="#4a4c48" stroke-width="1" stroke-linejoin="round" /><polygon points="1436.20,143.00 1442.20,148.40 1442.60,163.00 1439.00,165.60 1438.00,148.20" fill="#b4b7b1" stroke="#4a4c48" stroke-width="0.8" stroke-linejoin="round" /><polyline points="1422.20,145.60 1438.00,148.20 1442.20,148.40" fill="none" stroke="#4a4c48" stroke-width="0.8" stroke-linecap="round" stroke-linejoin="round" /><rect x="1439.20" y="152.00" width="2.20" height="6.60" fill="#e8d020" rx="0.8" stroke="#5a5a1a" stroke-width="0.5" /><path d="M1423.2 154.7 A6.3 6.3 0 0 1 1435.8 154.7Z" fill="#edd400" stroke="#3a3a2a" stroke-width="0.8" stroke-linejoin="round" stroke-linecap="round" /><path d="M1423.2 154.7 A6.3 6.3 0 0 0 1435.8 154.7Z" fill="#5c5e5a" stroke="#3a3a2a" stroke-width="0.8" stroke-linejoin="round" stroke-linecap="round" /><path d="M1437 150.6 C1437.4 144.6 1444.6 143 1447.4 146.6 L1449.4 144.4 L1449.8 151 L1443.4 150.6 L1445.4 148.8 C1443.6 146.6 1440 147.6 1439.8 150.8Z" fill="#5a9ae0" stroke="#2a5a9c" stroke-width="0.7" stroke-linejoin="round" stroke-linecap="round" /><path d="M1449.4 151.8 C1449 157.8 1441.8 159.4 1439 155.8 L1437 158 L1436.6 151.4 L1443 151.8 L1441 153.6 C1442.8 155.8 1446.4 154.8 1446.6 151.6Z" fill="#5a9ae0" stroke="#2a5a9c" stroke-width="0.7" stroke-linejoin="round" stroke-linecap="round" /><polygon points="1475.40,163.60 1485.80,165.40 1486.80,168.60 1485.00,169.00 1484.40,167.20 1474.40,165.60" fill="#e8d020" stroke="#5a5a1a" stroke-width="0.7" stroke-linejoin="round" /><polygon points="1485.60,165.20 1487.00,168.80 1485.20,169.20" fill="#c8c8c8" stroke="#5a5a5a" stroke-width="0.6" stroke-linejoin="round" /><polygon points="1460.00,145.60 1474.00,143.00 1480.00,148.40 1480.40,163.00 1476.80,165.60 1462.40,163.40" fill="#d9dcd6" stroke="#4a4c48" stroke-width="1" stroke-linejoin="round" /><polygon points="1474.00,143.00 1480.00,148.40 1480.40,163.00 1476.80,165.60 1475.80,148.20" fill="#b4b7b1" stroke="#4a4c48" stroke-width="0.8" stroke-linejoin="round" /><polyline points="1460.00,145.60 1475.80,148.20 1480.00,148.40" fill="none" stroke="#4a4c48" stroke-width="0.8" stroke-linecap="round" stroke-linejoin="round" /><rect x="1477.00" y="152.00" width="2.20" height="6.60" fill="#e8d020" rx="0.8" stroke="#5a5a1a" stroke-width="0.5" /><path d="M1461.0000000000002 154.7 A6.3 6.3 0 0 1 1473.6000000000001 154.7Z" fill="#edd400" stroke="#3a3a2a" stroke-width="0.8" stroke-linejoin="round" stroke-linecap="round" /><path d="M1461.0000000000002 154.7 A6.3 6.3 0 0 0 1473.6000000000001 154.7Z" fill="#5c5e5a" stroke="#3a3a2a" stroke-width="0.8" stroke-linejoin="round" stroke-linecap="round" /><line x1="1461.60" y1="157.40" x2="1472.60" y2="168.00" stroke="#7a0000" stroke-width="3.8" stroke-linecap="round"/><line x1="1472.60" y1="157.40" x2="1461.60" y2="168.00" stroke="#7a0000" stroke-width="3.8" stroke-linecap="round"/><line x1="1461.60" y1="157.40" x2="1472.60" y2="168.00" stroke="#e01414" stroke-width="2.4" stroke-linecap="round"/><line x1="1472.60" y1="157.40" x2="1461.60" y2="168.00" stroke="#e01414" stroke-width="2.4" stroke-linecap="round"/></svg>
<svg style="left:326.5px;top:71px;" width="10" height="6" viewBox="0 0 10 6"><path d="M0.5 0.5h9L5 5.5z" fill="#000"/></svg>
<svg style="left:378.5px;top:71px;" width="10" height="6" viewBox="0 0 10 6"><path d="M0.5 0.5h9L5 5.5z" fill="#808080"/></svg>
<svg style="left:958.9px;top:71px;" width="10" height="6" viewBox="0 0 10 6"><path d="M0.5 0.5h9L5 5.5z" fill="#000"/></svg>
<svg style="left:1129.5px;top:71px;" width="10" height="6" viewBox="0 0 10 6"><path d="M0.5 0.5h9L5 5.5z" fill="#000"/></svg>
<svg style="left:1189px;top:71px;" width="10" height="6" viewBox="0 0 10 6"><path d="M0.5 0.5h9L5 5.5z" fill="#000"/></svg>
<svg style="left:162.9px;top:111.5px;" width="10" height="6" viewBox="0 0 10 6"><path d="M0.5 0.5h9L5 5.5z" fill="#000"/></svg>
<svg style="left:669.4px;top:152.8px;" width="10" height="6" viewBox="0 0 10 6"><path d="M0.5 0.5h9L5 5.5z" fill="#000"/></svg>
<svg style="left:952px;top:152.8px;" width="10" height="6" viewBox="0 0 10 6"><path d="M0.5 0.5h9L5 5.5z" fill="#000"/></svg>
<span class="t" style="left:523.60px;top:63.49px;font-size:14.6px;color:#000;letter-spacing:-0.988px;">Part Design</span>
<svg style="left:1527px;top:153px;" width="10" height="8" viewBox="0 0 10 8"><path d="M1 1.5l2.6 2.5-2.6 2.5M5.4 1.5l2.6 2.5-2.6 2.5" stroke="#777" stroke-width="1.2" fill="none"/></svg>
<div style="left:327px;top:177px;width:1209px;height:576.5px;background:linear-gradient(#333366,#aaaac5);overflow:hidden"></div>
<svg style="left:0px;top:0px;" width="1536" height="816" viewBox="0 0 1536 816"><polygon points="578.75,275.5 560,298.75 520,542 539,519" fill="#3ae83a" stroke="#3ae83a" stroke-width="1.3"/><polygon points="539,519 520,542 528,530" fill="#46f546"/><polygon points="539,519 520,542 1014,632.5 1031,608.75" fill="#46f546" stroke="#46f546" stroke-width="1.3"/><polygon points="578.75,275.5 1072,365.75 1031,608.75 539,519" fill="#ebffeb" stroke="#33ee33" stroke-width="1.3"/><polygon points="593,297 1050,380.5 1033,401 590.5,321" fill="#46f546"/><polygon points="1050,380.5 1015.5,587 1003,585 1033,401" fill="#35e535"/><polygon points="590.5,321 1033,401 1003,585 559,504" fill="#ebffeb"/><polyline points="593,297 590.5,321 559,504 1003,585 1015.5,587" fill="none" stroke="#33ee33" stroke-width="1.3"/><defs><linearGradient id="gCr" gradientUnits="userSpaceOnUse" x1="612" y1="425" x2="722" y2="478"><stop offset="0" stop-color="#35e035"/><stop offset=".35" stop-color="#46f546"/><stop offset=".8" stop-color="#46f546"/><stop offset="1" stop-color="#2fd82f"/></linearGradient></defs><circle cx="665.5" cy="442" r="50" fill="url(#gCr)"/><polygon points="632.5,434 615.5,442 700,478 718,458" fill="url(#gCr)"/><circle cx="682.5" cy="421.5" r="51" fill="#ebffeb" stroke="#33ee33" stroke-width="1.3"/></svg>
<svg style="left:0px;top:0px;" width="1536" height="816" viewBox="0 0 1536 816"><polygon points="1481.00,182.00 1471.90,191.40 1490.30,191.40" fill="#ffffff" opacity=".42"/><polygon points="1481.00,287.20 1471.90,278.20 1490.30,278.20" fill="#ffffff" opacity=".42"/><polygon points="1428.60,234.80 1437.80,226.00 1437.80,243.60" fill="#ffffff" opacity=".42"/><polygon points="1533.60,234.80 1524.20,226.00 1524.20,243.60" fill="#ffffff" opacity=".42"/><path d="M1465 187.6 C1455.5 190.6 1448.5 196 1445 203.4 L1441.4 201.6 L1441.6 209.6 L1452.8 206.6 L1449.4 205.2 C1452.4 199.6 1458.6 195 1467.2 192.6Z" fill="#ffffff" opacity=".42"/><path d="M1496.6 187.6 C1506.1 190.6 1513.1 196 1516.6 203.4 L1520.2 201.6 L1520 209.6 L1508.8 206.6 L1512.2 205.2 C1509.2 199.6 1503 195 1494.4 192.6Z" fill="#ffffff" opacity=".42"/><g transform="rotate(12 1481.5 232)"><rect x="1456.00" y="206.00" width="51.00" height="50.00" fill="#b9b9d3" rx="9" opacity=".92"/><rect x="1462.50" y="212.00" width="40.00" height="38.00" fill="#d7d7e6" rx="3" /><rect x="1462.50" y="212.00" width="40.00" height="38.00" fill="none" rx="3" stroke="#c4c4da" stroke-width="1" /></g><ellipse cx="1464.60" cy="208.40" rx="3.20" ry="2.20" fill="#e6e6f2" transform="rotate(-30 1464.6 208.4)"/><ellipse cx="1459.00" cy="247.60" rx="3.20" ry="2.20" fill="#e6e6f2" transform="rotate(-30 1459.0 247.6)"/><ellipse cx="1500.00" cy="256.40" rx="3.20" ry="2.20" fill="#e6e6f2" transform="rotate(-30 1500.0 256.4)"/><line x1="1460.00" y1="197.00" x2="1500.60" y2="205.40" stroke="#ff0a0a" stroke-width="1.6" stroke-linecap="butt"/><line x1="1460.00" y1="197.00" x2="1451.00" y2="237.60" stroke="#14f014" stroke-width="1.6" stroke-linecap="butt"/><line x1="1460.20" y1="197.00" x2="1461.40" y2="207.60" stroke="#1010ff" stroke-width="1.6" stroke-linecap="butt"/><polygon points="1499.20,271.40 1507.00,268.60 1514.40,271.40 1514.40,280.60 1506.60,283.40 1499.20,280.60" fill="#8c8cae" /><polygon points="1499.20,271.40 1507.00,268.60 1514.40,271.40 1506.60,274.00" fill="#9a9aba" /><polygon points="1506.60,274.00 1514.40,271.40 1514.40,280.60 1506.60,283.40" fill="#7c7ca2" /><polygon points="1518.40,273.20 1528.40,273.20 1523.40,278.20" fill="#393961" /></svg>
<span class="t" style="left:1517.4px;top:197.4px;font-size:7.5px;color:#ff2a2a;">X</span>
<span class="t" style="left:1449px;top:243px;font-size:7.5px;color:#22e022;">Y</span>
<span class="t" style="left:1467.6px;top:218.6px;font-size:12.5px;font-weight:bold;color:#000;letter-spacing:-1.6px;transform-origin:0 50%;transform:rotate(12deg) scale(.8,.98);">BOTTOM</span>
<svg style="left:0px;top:0px;" width="1536" height="816" viewBox="0 0 1536 816"><line x1="1509.00" y1="726.00" x2="1527.00" y2="727.60" stroke="#a02424" stroke-width="1.2" stroke-linecap="butt"/><polygon points="1530.00,727.80 1524.40,725.40 1524.40,729.80" fill="#a02424" /><line x1="1509.00" y1="726.00" x2="1507.80" y2="741.00" stroke="#1a961a" stroke-width="1.2" stroke-linecap="butt"/><polygon points="1507.40,745.00 1505.20,739.60 1510.00,739.80" fill="#1a961a" /><circle cx="1509.00" cy="726.00" r="1.20" fill="#24249a" /></svg>
<span class="t" style="left:1530.6px;top:714.6px;font-size:8px;color:#111;">x</span>
<span class="t" style="left:1509.8px;top:731px;font-size:8px;color:#111;">Y</span>
<span class="t" style="left:1510.4px;top:712.4px;font-size:8px;color:#111;">z</span>
<div style="left:1008px;top:137.5px;width:37px;height:43px;border:3.5px solid #f5822a;box-sizing:border-box;"></div>
<div style="left:1034px;top:181px;width:205.5px;height:22.5px;background:#fff;border:1px solid #e4e4e4;box-sizing:border-box;box-shadow:1.5px 1.5px 2px rgba(0,0,0,.45);"></div>
<span class="t" style="left:1040.50px;top:182.43px;font-size:14.5px;color:#575757;letter-spacing:-0.106px;">Create a linear pattern feature</span>
<div style="left:0px;top:177px;width:321.4px;height:22.4px;background:#d9d9d9;border-bottom:1px solid #cfcfcf;box-sizing:border-box;"></div>
<span class="t" style="left:6.00px;top:180.39px;font-size:14.6px;color:#000;letter-spacing:-0.167px;">Combo View</span>
<svg style="left:276px;top:183px;" width="40" height="14" viewBox="0 0 40 14"><path d="M3.5 5.5h6v5h-6z M5.5 5.5v-2.5h6v5h-2" stroke="#222" stroke-width="1.6" fill="none"/><path d="M28 3l8 8M36 3l-8 8" stroke="#222" stroke-width="2" fill="none"/></svg>
<div style="left:1px;top:204px;width:65.4px;height:25.5px;background:#fff;"></div>
<div style="left:66.4px;top:205.5px;width:57px;height:24px;background:#f0f0f0;border:1px solid #dedede;border-bottom:none;box-sizing:border-box;"></div>
<div style="left:4.2px;top:203px;width:51.7px;height:26.3px;background:#fff;border:4px solid #f5822a;box-sizing:border-box;"></div>
<span class="t" style="left:14.50px;top:205.39px;font-size:14.6px;color:#000;letter-spacing:-1.316px;">Model</span>
<span class="t" style="left:79.00px;top:207.14px;font-size:14.6px;color:#000;letter-spacing:-1.330px;">Tasks</span>
<div style="left:1px;top:229px;width:319.5px;height:552px;background:#fff;"></div>
<div style="left:3px;top:482px;width:312.5px;height:272px;background:#f0f0f0;"></div>
<div style="left:3px;top:490px;width:312.5px;height:1px;background:#fff;"></div>
<div style="left:3px;top:229px;width:314.5px;height:253px;background:#fff;border:1px solid #8e96a0;box-sizing:border-box;"></div>
<span class="t" style="left:9.00px;top:236.39px;font-size:14.6px;color:#000;letter-spacing:-0.041px;">Labels &amp; Attributes</span>
<span class="t" style="left:199.00px;top:236.39px;font-size:14.6px;color:#000;letter-spacing:-0.153px;">Description</span>
<div style="left:193px;top:233px;width:1px;height:26px;background:#e5e5e5;"></div>
<div style="left:297px;top:230px;width:20px;height:232px;background:#f0f0f0;"></div>
<div style="left:297px;top:290px;width:20px;height:151px;background:#cdcdcd;"></div>
<svg style="left:297px;top:230px;" width="20" height="232" viewBox="0 0 20 232"><path d="M6 13l4-4 4 4" stroke="#505050" stroke-width="1.6" fill="none"/><path d="M6 219l4 4 4-4" stroke="#505050" stroke-width="1.6" fill="none"/></svg>
<div style="left:4px;top:462px;width:313px;height:19px;background:#f0f0f0;"></div>
<div style="left:24px;top:462px;width:236px;height:19px;background:#cdcdcd;"></div>
<svg style="left:4px;top:462px;" width="313" height="19" viewBox="0 0 313 19"><path d="M12 5.5l-4 4 4 4" stroke="#505050" stroke-width="1.6" fill="none"/><path d="M279 5.5l4 4-4 4" stroke="#505050" stroke-width="1.6" fill="none"/></svg>
<div style="left:52px;top:284px;width:142px;height:24px;background:#e0e0ff;"></div>
<div style="left:76px;top:428px;width:220px;height:24px;background:#cce8ff;"></div>
<div style="left:78px;top:428px;width:115px;height:24px;border:1px dotted #222;box-sizing:border-box;"></div>
<svg style="left:36px;top:266px;" width="8" height="12" viewBox="0 0 8 12"><path d="M1.5 1.5l4.5 4.5-4.5 4.5" stroke="#9a9a9a" stroke-width="1.7" fill="none"/></svg>
<svg style="left:34px;top:292px;" width="12" height="8" viewBox="0 0 12 8"><path d="M1.5 1.5l4.5 4.5 4.5-4.5" stroke="#222" stroke-width="1.9" fill="none"/></svg>
<svg style="left:60px;top:314px;" width="8" height="12" viewBox="0 0 8 12"><path d="M1.5 1.5l4.5 4.5-4.5 4.5" stroke="#9a9a9a" stroke-width="1.7" fill="none"/></svg>
<svg style="left:60px;top:338px;" width="8" height="12" viewBox="0 0 8 12"><path d="M1.5 1.5l4.5 4.5-4.5 4.5" stroke="#9a9a9a" stroke-width="1.7" fill="none"/></svg>
<svg style="left:60px;top:362px;" width="8" height="12" viewBox="0 0 8 12"><path d="M1.5 1.5l4.5 4.5-4.5 4.5" stroke="#9a9a9a" stroke-width="1.7" fill="none"/></svg>
<svg style="left:60px;top:386px;" width="8" height="12" viewBox="0 0 8 12"><path d="M1.5 1.5l4.5 4.5-4.5 4.5" stroke="#9a9a9a" stroke-width="1.7" fill="none"/></svg>
<svg style="left:60px;top:434px;" width="8" height="12" viewBox="0 0 8 12"><path d="M1.5 1.5l4.5 4.5-4.5 4.5" stroke="#9a9a9a" stroke-width="1.7" fill="none"/></svg>
<span class="t" style="left:82.00px;top:262.89px;font-size:14.6px;color:#000;letter-spacing:-0.426px;">Body</span>
<span class="t" style="left:82.00px;top:286.39px;font-size:14.6px;color:#000;font-weight:bold;letter-spacing:-0.476px;">Body001</span>
<span class="t" style="left:106.00px;top:310.89px;font-size:14.6px;color:#9d9d9d;letter-spacing:-0.288px;">Origin001</span>
<span class="t" style="left:106.00px;top:334.89px;font-size:14.6px;color:#9d9d9d;letter-spacing:-1.488px;">Pad</span>
<span class="t" style="left:106.00px;top:358.89px;font-size:14.6px;color:#9d9d9d;letter-spacing:-0.627px;">Pocket</span>
<span class="t" style="left:106.00px;top:383.14px;font-size:14.6px;color:#9d9d9d;letter-spacing:-1.067px;">Pad001</span>
<span class="t" style="left:106.00px;top:407.39px;font-size:14.6px;color:#9d9d9d;letter-spacing:-0.388px;">LinearPattern</span>
<span class="t" style="left:106.00px;top:431.14px;font-size:14.6px;color:#000;letter-spacing:-0.867px;">Pad002</span>
<svg style="left:0px;top:0px;" width="1536" height="816" viewBox="0 0 1536 816"><polygon points="57.80,268.55 62.02,270.07 62.02,273.96 65.92,275.61 65.92,279.97 57.80,277.00" fill="#4a7fc0" stroke="#0b1521" stroke-width="0.7" stroke-linejoin="round" /><polygon points="65.92,275.61 71.66,270.79 71.66,274.56 65.92,279.97" fill="#2c5aa0" stroke="#0b1521" stroke-width="0.7" stroke-linejoin="round" /><polygon points="57.80,268.55 63.81,263.60 67.77,265.38 62.02,270.07" fill="#729fcf" stroke="#0b1521" stroke-width="0.7" stroke-linejoin="round" /><polygon points="62.02,270.07 67.77,265.38 67.77,269.14 62.02,273.96" fill="#2c5aa0" stroke="#0b1521" stroke-width="0.7" stroke-linejoin="round" /><polygon points="62.02,273.96 67.77,269.14 71.66,270.79 65.92,275.61" fill="#729fcf" stroke="#0b1521" stroke-width="0.7" stroke-linejoin="round" /><polygon points="57.80,292.55 62.02,294.07 62.02,297.96 65.92,299.61 65.92,303.97 57.80,301.00" fill="#4a7fc0" stroke="#0b1521" stroke-width="0.7" stroke-linejoin="round" /><polygon points="65.92,299.61 71.66,294.79 71.66,298.56 65.92,303.97" fill="#2c5aa0" stroke="#0b1521" stroke-width="0.7" stroke-linejoin="round" /><polygon points="57.80,292.55 63.81,287.60 67.77,289.38 62.02,294.07" fill="#729fcf" stroke="#0b1521" stroke-width="0.7" stroke-linejoin="round" /><polygon points="62.02,294.07 67.77,289.38 67.77,293.14 62.02,297.96" fill="#2c5aa0" stroke="#0b1521" stroke-width="0.7" stroke-linejoin="round" /><polygon points="62.02,297.96 67.77,293.14 71.66,294.79 65.92,299.61" fill="#729fcf" stroke="#0b1521" stroke-width="0.7" stroke-linejoin="round" /><polyline points="88.20,311.60 88.20,320.00 97.80,320.00" fill="none" stroke="#8a8a8a" stroke-width="2" stroke-linecap="round" stroke-linejoin="round" /><line x1="88.20" y1="320.00" x2="82.00" y2="326.40" stroke="#8a8a8a" stroke-width="2" stroke-linecap="round"/><polygon points="80.20,347.00 88.60,344.20 98.00,346.00 89.40,351.20" fill="none" stroke="#707070" stroke-width="3.0" stroke-linejoin="round" /><polygon points="80.20,347.00 88.60,344.20 98.00,346.00 89.40,351.20" fill="none" stroke="#fdfdfd" stroke-width="1.0" stroke-linejoin="round" /><polygon points="80.20,339.20 89.20,341.80 89.20,347.20 80.20,344.60" fill="#a6a6a6" stroke="#6e6e6e" stroke-width="0.7" stroke-linejoin="round" /><polygon points="89.20,341.80 98.00,337.80 98.00,343.20 89.20,347.20" fill="#8c8c8c" stroke="#6e6e6e" stroke-width="0.7" stroke-linejoin="round" /><polygon points="80.20,339.20 88.80,335.80 98.00,337.80 89.20,341.80" fill="#c4c4c4" stroke="#6e6e6e" stroke-width="0.7" stroke-linejoin="round" /><polygon points="80.20,366.40 89.40,369.60 89.40,375.20 80.20,372.00" fill="#a6a6a6" stroke="#6e6e6e" stroke-width="0.7" stroke-linejoin="round" /><polygon points="89.40,369.60 98.00,363.00 98.00,368.60 89.40,375.20" fill="#8c8c8c" stroke="#6e6e6e" stroke-width="0.7" stroke-linejoin="round" /><polygon points="80.20,366.40 89.00,360.40 98.00,363.00 89.40,369.60" fill="#c4c4c4" stroke="#6e6e6e" stroke-width="0.7" stroke-linejoin="round" /><polygon points="84.40,366.00 89.20,362.60 93.80,364.00 89.20,367.60" fill="#8e8e8e" stroke="#6c6c6c" stroke-width="0.6" stroke-linejoin="round" /><polygon points="80.20,395.20 88.60,392.40 98.00,394.20 89.40,399.40" fill="none" stroke="#707070" stroke-width="3.0" stroke-linejoin="round" /><polygon points="80.20,395.20 88.60,392.40 98.00,394.20 89.40,399.40" fill="none" stroke="#fdfdfd" stroke-width="1.0" stroke-linejoin="round" /><polygon points="80.20,387.40 89.20,390.00 89.20,395.40 80.20,392.80" fill="#a6a6a6" stroke="#6e6e6e" stroke-width="0.7" stroke-linejoin="round" /><polygon points="89.20,390.00 98.00,386.00 98.00,391.40 89.20,395.40" fill="#8c8c8c" stroke="#6e6e6e" stroke-width="0.7" stroke-linejoin="round" /><polygon points="80.20,387.40 88.80,384.00 98.00,386.00 89.20,390.00" fill="#c4c4c4" stroke="#6e6e6e" stroke-width="0.7" stroke-linejoin="round" /><polygon points="80.20,424.00 80.20,415.40 83.40,414.00 92.80,408.20 98.00,409.80 98.00,424.00" fill="#b6b6b6" stroke="#8a8a8a" stroke-width="0.8" stroke-linejoin="round" /><polygon points="81.20,414.60 83.60,415.80 83.60,418.40 81.20,417.20" fill="#d2d2d2" stroke="#8a8a8a" stroke-width="0.5" stroke-linejoin="round" /><polygon points="83.60,415.80 86.00,414.60 86.00,417.20 83.60,418.40" fill="#bcbcbc" stroke="#8a8a8a" stroke-width="0.5" stroke-linejoin="round" /><polygon points="81.20,414.60 83.60,413.40 86.00,414.60 83.60,415.80" fill="#e4e4e4" stroke="#8a8a8a" stroke-width="0.5" stroke-linejoin="round" /><polygon points="86.60,414.60 89.00,415.80 89.00,418.40 86.60,417.20" fill="#d2d2d2" stroke="#8a8a8a" stroke-width="0.5" stroke-linejoin="round" /><polygon points="89.00,415.80 91.40,414.60 91.40,417.20 89.00,418.40" fill="#bcbcbc" stroke="#8a8a8a" stroke-width="0.5" stroke-linejoin="round" /><polygon points="86.60,414.60 89.00,413.40 91.40,414.60 89.00,415.80" fill="#e4e4e4" stroke="#8a8a8a" stroke-width="0.5" stroke-linejoin="round" /><polygon points="91.80,414.60 94.20,415.80 94.20,418.40 91.80,417.20" fill="#d2d2d2" stroke="#8a8a8a" stroke-width="0.5" stroke-linejoin="round" /><polygon points="94.20,415.80 96.60,414.60 96.60,417.20 94.20,418.40" fill="#bcbcbc" stroke="#8a8a8a" stroke-width="0.5" stroke-linejoin="round" /><polygon points="91.80,414.60 94.20,413.40 96.60,414.60 94.20,415.80" fill="#e4e4e4" stroke="#8a8a8a" stroke-width="0.5" stroke-linejoin="round" /><polygon points="81.00,443.20 87.00,440.80 93.00,442.40 86.60,446.40" fill="none" stroke="#7a1030" stroke-width="2.2" stroke-linejoin="round" /><polygon points="81.00,443.20 87.00,440.80 93.00,442.40 86.60,446.40" fill="none" stroke="#c8a0b0" stroke-width="0.7" stroke-linejoin="round" /><polygon points="81.60,435.40 89.40,437.60 89.40,441.80 81.60,439.60" fill="#2f6ab4" stroke="#0b1521" stroke-width="0.7" stroke-linejoin="round" /><polygon points="89.40,437.60 97.40,434.00 97.40,438.20 89.40,441.80" fill="#1f4f92" stroke="#0b1521" stroke-width="0.7" stroke-linejoin="round" /><polygon points="81.60,435.40 89.60,432.20 97.40,434.00 89.40,437.60" fill="#5a92d4" stroke="#0b1521" stroke-width="0.7" stroke-linejoin="round" /><circle cx="93.40" cy="444.00" r="4.20" fill="#f4fff4" stroke="#18b83a" stroke-width="2" /><polygon points="92.20,441.40 94.60,441.40 94.60,444.00 96.20,444.00 93.40,447.00 90.60,444.00 92.20,444.00" fill="#c8d8f0" /></svg>
<div style="left:68px;top:426px;width:106px;height:31px;border:3px solid #f5822a;box-sizing:border-box;"></div>
<div style="left:5px;top:491.5px;width:308px;height:258px;background:#fff;border:1px solid #8e96a0;box-sizing:border-box;"></div>
<span class="t" style="left:11.00px;top:498.14px;font-size:14.6px;color:#000;letter-spacing:-0.168px;">Property</span>
<span class="t" style="left:132.00px;top:498.14px;font-size:14.6px;color:#000;letter-spacing:-0.814px;">Value</span>
<div style="left:126px;top:495px;width:1px;height:26px;background:#e5e5e5;"></div>
<div style="left:291px;top:492px;width:21px;height:257px;background:#f0f0f0;"></div>
<div style="left:292px;top:514px;width:19px;height:112px;background:#cdcdcd;"></div>
<svg style="left:291px;top:492px;" width="21" height="257" viewBox="0 0 21 257"><path d="M6.5 13l4-4 4 4" stroke="#505050" stroke-width="1.6" fill="none"/><path d="M6.5 244l4 4 4-4" stroke="#505050" stroke-width="1.6" fill="none"/></svg>
<div style="left:6px;top:521.6px;width:285px;height:24.600000000000023px;background:#a0a0a0;"></div>
<span class="t" style="left:34.00px;top:524.39px;font-size:14.6px;color:#fff;font-weight:bold;letter-spacing:-1.467px;">Base</span>
<div style="left:30px;top:546.2px;width:261px;height:25.0px;background:#f3f3f3;"></div>
<div style="left:30px;top:570.2px;width:261px;height:1px;background:#d4d4d4;"></div>
<div style="left:30px;top:546.2px;width:261px;height:1px;background:#fbfbfb;"></div>
<div style="left:124px;top:546.2px;width:2px;height:25.0px;background:#d4d4d4;"></div>
<div style="left:290px;top:546.2px;width:1px;height:25.0px;background:#d4d4d4;"></div>
<span class="t" style="left:34.00px;top:549.39px;font-size:14.6px;color:#000;letter-spacing:-0.680px;">Label</span>
<span class="t" style="left:130.00px;top:549.39px;font-size:14.6px;color:#000;letter-spacing:-0.867px;">Pad002</span>
<div style="left:6px;top:571.2px;width:285px;height:25.09999999999991px;background:#a0a0a0;"></div>
<span class="t" style="left:34.00px;top:574.89px;font-size:14.6px;color:#fff;font-weight:bold;letter-spacing:-1.388px;">Pad</span>
<div style="left:30px;top:596.3px;width:261px;height:25.0px;background:#f3f3f3;"></div>
<div style="left:30px;top:620.3px;width:261px;height:1px;background:#d4d4d4;"></div>
<div style="left:30px;top:596.3px;width:261px;height:1px;background:#fbfbfb;"></div>
<div style="left:124px;top:596.3px;width:2px;height:25.0px;background:#d4d4d4;"></div>
<div style="left:290px;top:596.3px;width:1px;height:25.0px;background:#d4d4d4;"></div>
<span class="t" style="left:34.00px;top:600.39px;font-size:14.6px;color:#000;letter-spacing:-0.883px;">Type</span>
<span class="t" style="left:130.00px;top:600.39px;font-size:14.6px;color:#000;letter-spacing:-0.330px;">Length</span>
<div style="left:30px;top:621.3px;width:261px;height:25.0px;background:#fff;"></div>
<div style="left:30px;top:645.3px;width:261px;height:1px;background:#d4d4d4;"></div>
<div style="left:30px;top:621.3px;width:261px;height:1px;background:#fbfbfb;"></div>
<div style="left:124px;top:621.3px;width:2px;height:25.0px;background:#d4d4d4;"></div>
<div style="left:290px;top:621.3px;width:1px;height:25.0px;background:#d4d4d4;"></div>
<span class="t" style="left:34.00px;top:625.89px;font-size:14.6px;color:#000;letter-spacing:-0.330px;">Length</span>
<span class="t" style="left:130.00px;top:625.89px;font-size:14.6px;color:#000;letter-spacing:-0.416px;">12.60 mm</span>
<div style="left:30px;top:646.3px;width:261px;height:25.0px;background:#f3f3f3;"></div>
<div style="left:30px;top:670.3px;width:261px;height:1px;background:#d4d4d4;"></div>
<div style="left:30px;top:646.3px;width:261px;height:1px;background:#fbfbfb;"></div>
<div style="left:124px;top:646.3px;width:2px;height:25.0px;background:#d4d4d4;"></div>
<div style="left:290px;top:646.3px;width:1px;height:25.0px;background:#d4d4d4;"></div>
<span class="t" style="left:34.00px;top:650.89px;font-size:14.6px;color:#000;letter-spacing:-0.295px;">Length2</span>
<span class="t" style="left:130.00px;top:650.89px;font-size:14.6px;color:#000;letter-spacing:-0.379px;">100.00 mm</span>
<div style="left:30px;top:671.3px;width:261px;height:25.100000000000023px;background:#fff;"></div>
<div style="left:30px;top:695.4px;width:261px;height:1px;background:#d4d4d4;"></div>
<div style="left:30px;top:671.3px;width:261px;height:1px;background:#fbfbfb;"></div>
<div style="left:124px;top:671.3px;width:2px;height:25.100000000000023px;background:#d4d4d4;"></div>
<div style="left:290px;top:671.3px;width:1px;height:25.100000000000023px;background:#d4d4d4;"></div>
<span class="t" style="left:34.00px;top:676.39px;font-size:14.6px;color:#000;letter-spacing:-0.499px;">Use Custom...</span>
<span class="t" style="left:130.00px;top:676.39px;font-size:14.6px;color:#000;letter-spacing:-0.709px;">false</span>
<div style="left:30px;top:696.4px;width:261px;height:25.200000000000045px;background:#f3f3f3;"></div>
<div style="left:30px;top:720.6px;width:261px;height:1px;background:#d4d4d4;"></div>
<div style="left:30px;top:696.4px;width:261px;height:1px;background:#fbfbfb;"></div>
<div style="left:124px;top:696.4px;width:2px;height:25.200000000000045px;background:#d4d4d4;"></div>
<div style="left:290px;top:696.4px;width:1px;height:25.200000000000045px;background:#d4d4d4;"></div>
<span class="t" style="left:34.00px;top:701.39px;font-size:14.6px;color:#000;letter-spacing:-0.076px;">Direction</span>
<span class="t" style="left:130.00px;top:701.39px;font-size:14.6px;color:#000;letter-spacing:-0.431px;">[1.00 1.00 1.00]</span>
<div style="left:30px;top:721.6px;width:261px;height:27.399999999999977px;background:#fff;"></div>
<div style="left:30px;top:748px;width:261px;height:1px;background:#d4d4d4;"></div>
<div style="left:30px;top:721.6px;width:261px;height:1px;background:#fbfbfb;"></div>
<div style="left:124px;top:721.6px;width:2px;height:27.399999999999977px;background:#d4d4d4;"></div>
<div style="left:290px;top:721.6px;width:1px;height:27.399999999999977px;background:#d4d4d4;"></div>
<span class="t" style="left:34.00px;top:726.39px;font-size:14.6px;color:#000;letter-spacing:-0.709px;">Up To Face</span>
<svg style="left:14px;top:703.5px;" width="8" height="12" viewBox="0 0 8 12"><path d="M1.5 1.5l4.5 4.5-4.5 4.5" stroke="#9a9a9a" stroke-width="1.7" fill="none"/></svg>
<div style="left:1px;top:754px;width:319.5px;height:27px;background:#fff;"></div>
<div style="left:115px;top:754px;width:205px;height:1px;background:#e8e8e8;"></div>
<div style="left:5px;top:754px;width:52px;height:20.5px;background:#f0f0f0;border:1px solid #e2e2e2;border-top:none;box-sizing:border-box;"></div>
<div style="left:57px;top:752px;width:58px;height:25.5px;background:#fff;border:1px solid #e2e2e2;border-top:none;box-sizing:border-box;"></div>
<span class="t" style="left:17.00px;top:754.14px;font-size:14.6px;color:#000;letter-spacing:-1.294px;">View</span>
<span class="t" style="left:74.00px;top:755.39px;font-size:14.6px;color:#000;letter-spacing:-1.613px;">Data</span>
<div style="left:328px;top:754px;width:1208px;height:28px;background:#f0f0f0;"></div>
<div style="left:329.5px;top:753.5px;width:134px;height:26px;background:#f0f0f0;border:1px solid #d9d9d9;border-top:none;box-sizing:border-box;"></div>
<div style="left:463.4px;top:753.5px;width:163.4px;height:28px;background:#fff;border:1px solid #d9d9d9;border-top:none;box-sizing:border-box;"></div>
<svg style="left:342px;top:756.2px;" width="21" height="20" viewBox="0 0 21 20"><defs><linearGradient id="gF" x1="0" y1="0" x2="1" y2="0"><stop offset="0" stop-color="#8e0a12"/><stop offset=".35" stop-color="#d81e28"/><stop offset="1" stop-color="#e8343c"/></linearGradient></defs><path d="M0 0.6h9.85v4.4h-5.05v2.3h3.9v3.4h-3.9v7.6h-4.8z" fill="url(#gF)"/><polygon points="16.24,10.79 18.13,11.03 18.13,12.97 16.24,13.21 15.77,14.36 16.93,15.86 15.56,17.23 14.06,16.07 12.91,16.54 12.67,18.43 10.73,18.43 10.49,16.54 9.34,16.07 7.84,17.23 6.47,15.86 7.63,14.36 7.16,13.21 5.27,12.97 5.27,11.03 7.16,10.79 7.63,9.64 6.47,8.14 7.84,6.77 9.34,7.93 10.49,7.46 10.73,5.57 12.67,5.57 12.91,7.46 14.06,7.93 15.56,6.77 16.93,8.14 15.77,9.64" fill="#4876bc" stroke="#2f5594" stroke-width=".5"/><circle cx="11.7" cy="12" r="1.9" fill="#fff"/></svg>
<svg style="left:480.6px;top:758.2px;" width="21" height="20" viewBox="0 0 21 20"><defs><linearGradient id="gF" x1="0" y1="0" x2="1" y2="0"><stop offset="0" stop-color="#8e0a12"/><stop offset=".35" stop-color="#d81e28"/><stop offset="1" stop-color="#e8343c"/></linearGradient></defs><path d="M0 0.6h9.85v4.4h-5.05v2.3h3.9v3.4h-3.9v7.6h-4.8z" fill="url(#gF)"/><polygon points="16.24,10.79 18.13,11.03 18.13,12.97 16.24,13.21 15.77,14.36 16.93,15.86 15.56,17.23 14.06,16.07 12.91,16.54 12.67,18.43 10.73,18.43 10.49,16.54 9.34,16.07 7.84,17.23 6.47,15.86 7.63,14.36 7.16,13.21 5.27,12.97 5.27,11.03 7.16,10.79 7.63,9.64 6.47,8.14 7.84,6.77 9.34,7.93 10.49,7.46 10.73,5.57 12.67,5.57 12.91,7.46 14.06,7.93 15.56,6.77 16.93,8.14 15.77,9.64" fill="#4876bc" stroke="#2f5594" stroke-width=".5"/><circle cx="11.7" cy="12" r="1.9" fill="#fff"/></svg>
<span class="t" style="left:365.80px;top:757.09px;font-size:14.6px;color:#000;letter-spacing:-0.751px;">Start page</span>
<span class="t" style="left:504.30px;top:759.09px;font-size:14.6px;color:#000;letter-spacing:-0.579px;">Unnamed : 1*</span>
<svg style="left:432px;top:758px;" width="18" height="18" viewBox="0 0 18 18"><rect x="0.5" y="0.5" width="16" height="16" rx="1.5" fill="#c6c6c6" stroke="#a8a8a8"/><path d="M4.6 4.6l7.8 7.8M12.4 4.6l-7.8 7.8" stroke="#f4f4f4" stroke-width="2.8"/></svg>
<svg style="left:593px;top:760px;" width="18" height="18" viewBox="0 0 18 18"><rect x="0.5" y="0.5" width="16" height="16" rx="1.5" fill="#e8704a" stroke="#d9512c"/><path d="M4.6 4.6l7.8 7.8M12.4 4.6l-7.8 7.8" stroke="#fff" stroke-width="2.8"/></svg>
<div style="left:0px;top:783px;width:1536px;height:33px;background:#f0f0f0;"></div>
<span class="t" style="left:8.00px;top:790.89px;font-size:14.6px;color:#000;letter-spacing:-0.159px;">Create a linear pattern feature</span>
<svg style="left:1305px;top:790px;" width="22" height="22" viewBox="0 0 22 22"><path d="M4 8a7 7 0 0 1 13 0M17 14a7 7 0 0 1-13 0" transform="rotate(-20 10.5 11)" stroke="#555" stroke-width="2.2" fill="none"/><circle cx="17.5" cy="5" r="3" fill="#333"/><circle cx="5" cy="17" r="3" fill="#333"/></svg>
<div style="left:1326.4px;top:790px;width:43.6px;height:22px;overflow:hidden"><span class="t" style="left:0;top:1px;font-size:15px;letter-spacing:-0.55px">Gesture</span></div>
<svg style="left:1370px;top:798px;" width="9" height="6" viewBox="0 0 9 6"><path d="M0 0.5h8L4 5z" fill="#000"/></svg>
<div style="left:1388px;top:785px;width:1px;height:30px;background:#d9d9d9;"></div>
<span class="t" style="left:1394.20px;top:790.89px;font-size:14.6px;color:#000;letter-spacing:-0.667px;">115.25 mm x 54.88 mm</span>
</body></html>
